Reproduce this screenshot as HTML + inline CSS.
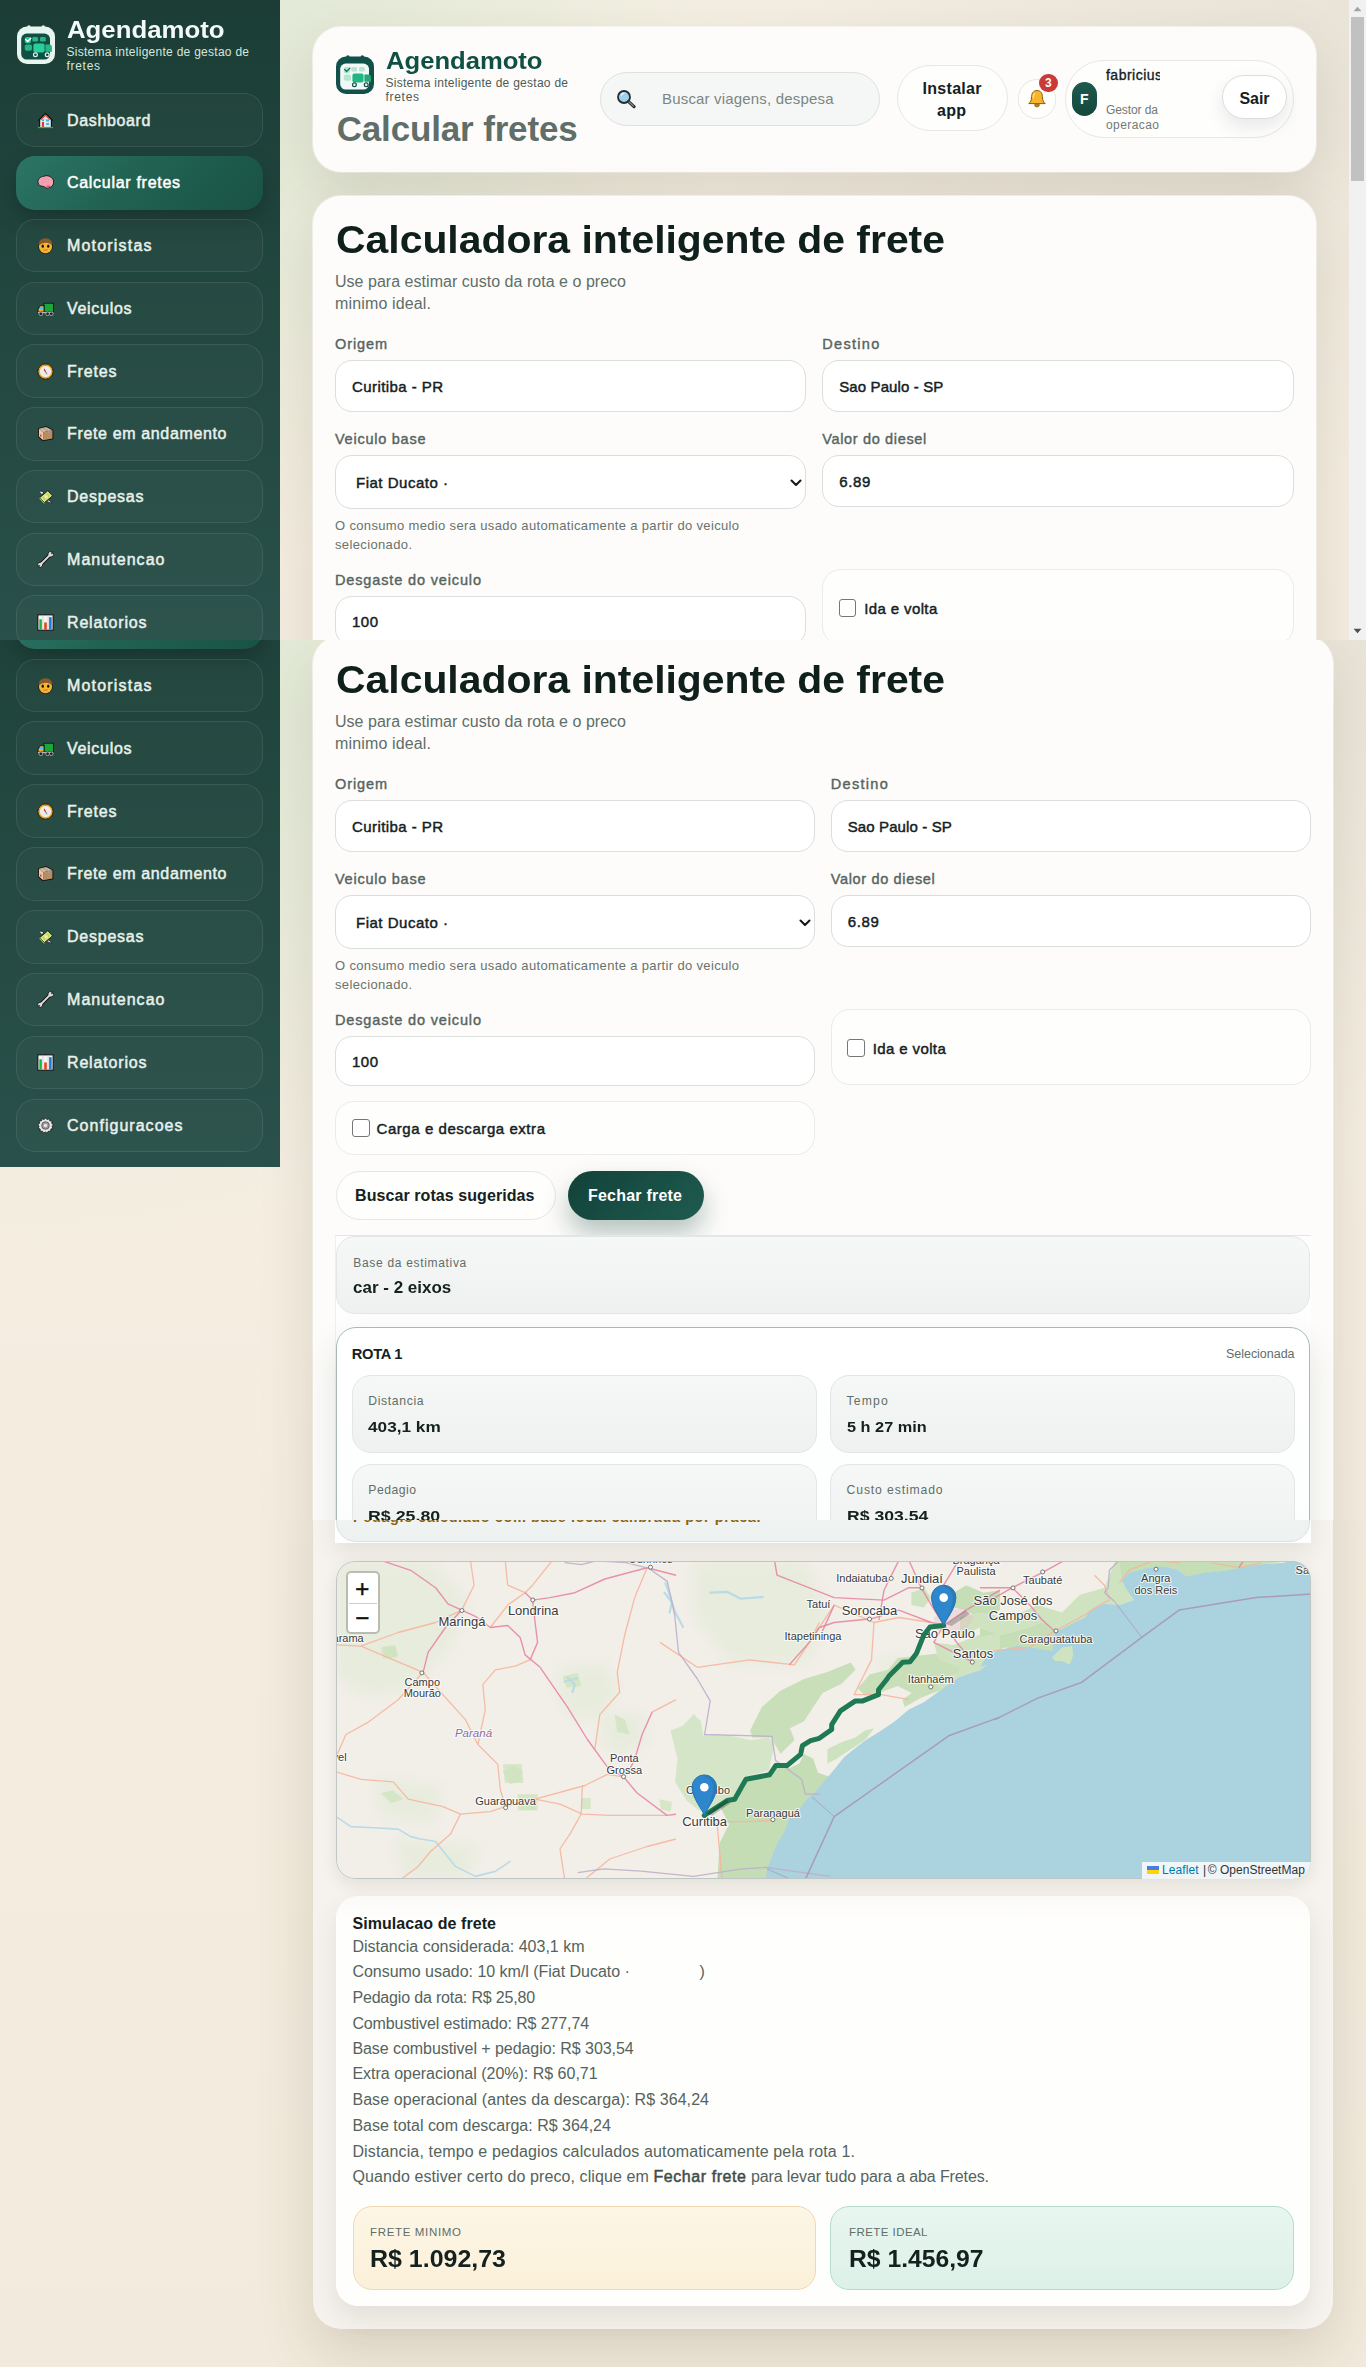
<!DOCTYPE html><html lang="pt-BR"><head><meta charset="utf-8"><title>Agendamoto - Calcular fretes</title><style>
*{box-sizing:border-box;margin:0;padding:0}
html,body{width:1366px;height:2367px;overflow:hidden}
body{position:relative;font-family:"Liberation Sans",sans-serif;background:#f4ecdf;-webkit-font-smoothing:antialiased}
.chunk{position:absolute;left:0;width:1366px;overflow:hidden}
.in{position:absolute;left:0;width:1366px}
.t{position:absolute;white-space:nowrap}
.b{position:absolute}
.card{background:#fdfcfa;border-radius:28px;box-shadow:0 22px 56px rgba(60,52,30,.13),0 0 0 1px rgba(255,255,255,.6)}
.inp{background:#fff;border:1px solid #dadfdc;border-radius:17px}
.soft{background:#fefefd;border:1px solid #e9ece9;border-radius:19px}
.nav{border:1px solid rgba(255,255,255,.09);border-radius:19px;background:rgba(255,255,255,.022)}
.nav.act{border:0;background:linear-gradient(135deg,#2c7565 0%,#216353 45%,#195245 100%);box-shadow:0 10px 22px rgba(0,0,0,.22)}
.met{background:linear-gradient(180deg,#f6f8f7,#eef1f0);border:1px solid #e2e6e4;border-radius:19px}
.cb{background:#fff;border:1.5px solid #767676;border-radius:3px}
svg{position:absolute;display:block}
</style></head><body>
<div class="chunk" style="top:0;height:640px;background:radial-gradient(760px 600px at 0px 0px,rgba(190,222,190,0.55),rgba(190,222,190,0) 100%),radial-gradient(700px 500px at 1366px 0px,rgba(150,150,140,0.14),rgba(150,150,140,0) 100%),linear-gradient(180deg,#f6f0e4,#f4ecdf);"><div class="in" style="top:0">
<div class="b card" style="left:313.00px;top:27.00px;width:1003.00px;height:144.50px;"></div>
<div class="b" style="left:336px;top:55.1px"><svg width="38" height="39" viewBox="0 -1 38 39">
<rect x="10.2" y="-0.8" width="3.4" height="4" rx="1.6" fill="#11514a"/><rect x="24.6" y="-0.8" width="3.4" height="4" rx="1.6" fill="#11514a"/>
<rect x="0" y="0.5" width="38" height="37.5" rx="10" fill="#11514a"/>
<rect x="4.2" y="7.6" width="28.8" height="26" rx="5.5" fill="#f2f8f5"/>
<rect x="7.8" y="11" width="6.2" height="6.2" rx="1.8" fill="#b8e5d1"/>
<path d="M8.7 13.6 L10.6 15.6 L13.8 12.2" stroke="#12805f" stroke-width="1.4" fill="none" stroke-linecap="round"/>
<rect x="15.3" y="11" width="5.8" height="4.6" rx="1.4" fill="#b8e5d1"/><rect x="23" y="11" width="5.8" height="4.6" rx="1.4" fill="#b8e5d1"/>
<rect x="7.8" y="18.5" width="7.2" height="6.2" rx="1.8" fill="#b8e5d1"/>
<rect x="16.4" y="17.4" width="11.2" height="9" rx="2" fill="#20b785"/>
<path d="M28.4 18.6 h4 a2.6 2.6 0 0 1 2.6 2.6 v4.6 h-6.6z" fill="#1fa878"/>
<circle cx="18.4" cy="28.7" r="1.9" fill="#f2f8f5" stroke="#11514a" stroke-width="1.2"/><circle cx="30.2" cy="28.7" r="1.9" fill="#f2f8f5" stroke="#11514a" stroke-width="1.2"/>
</svg></div>
<div class="t" style="top:47.93px;font-size:23.50px;line-height:26.25px;color:#0f4f44;left:385.50px;font-weight:700;transform:scaleX(1.0898);transform-origin:0 0;">Agendamoto</div>
<div class="t" style="top:76.84px;font-size:12.00px;line-height:13.40px;color:#4b5b56;left:385.50px;letter-spacing:0.271px;">Sistema inteligente de gestao de</div>
<div class="t" style="top:91.04px;font-size:12.00px;line-height:13.40px;color:#4b5b56;left:385.50px;letter-spacing:0.698px;">fretes</div>
<div class="t" style="top:109.42px;font-size:35.00px;line-height:39.09px;color:#5f6e68;left:336.70px;font-weight:700;letter-spacing:-0.155px;">Calcular fretes</div>
<div class="b " style="left:600.00px;top:72.00px;width:280.00px;height:54.00px;background:#f5f7f6;border:1px solid #dde2df;border-radius:27px;"></div>
<svg class="b" style="left:616px;top:89px" width="20" height="20" viewBox="0 0 20 20"><circle cx="8" cy="8" r="6" fill="#9fd0ef" stroke="#2a2a2a" stroke-width="1.8"/><path d="M5 6.5 A3.5 3.5 0 0 1 8.5 4.2" stroke="#e6f4fc" stroke-width="1.5" fill="none"/><path d="M12.6 12.6 L18 17.6" stroke="#2a2a2a" stroke-width="3.2" stroke-linecap="round"/><path d="M13 13 L17.4 17" stroke="#8a8a8a" stroke-width="1.2" stroke-linecap="round"/></svg>
<div class="t" style="top:91.12px;font-size:15.00px;line-height:16.75px;color:#7b8682;left:662.00px;letter-spacing:0.177px;">Buscar viagens, despesa</div>
<div class="b " style="left:897.00px;top:65.30px;width:110.50px;height:66.00px;background:#fefefd;border:1px solid #e6e9e6;border-radius:33px;"></div>
<div class="t" style="top:79.52px;font-size:16.00px;line-height:17.87px;color:#14211e;left:922.50px;font-weight:700;letter-spacing:0.298px;">Instalar</div>
<div class="t" style="top:102.02px;font-size:16.00px;line-height:17.87px;color:#14211e;left:937.00px;font-weight:700;letter-spacing:0.277px;">app</div>
<div class="b " style="left:1018.00px;top:79.00px;width:37.50px;height:40.00px;background:#fefefd;border:1px solid #e6e9e6;border-radius:20px;"></div>
<svg class="b" style="left:1027px;top:89px" width="20" height="20" viewBox="0 0 20 20"><path d="M10 1.5 C6.4 1.5 4.6 4.4 4.6 7.6 C4.6 11.6 3.4 13 1.8 14.6 H18.2 C16.6 13 15.4 11.6 15.4 7.6 C15.4 4.4 13.6 1.5 10 1.5Z" fill="#f6b62c" stroke="#8a5a12" stroke-width="1"/><path d="M7.6 15.6 A2.4 2.4 0 0 0 12.4 15.6Z" fill="#c98718" stroke="#8a5a12" stroke-width="0.8"/><path d="M7.4 4.4 C6.4 5.6 6.2 7 6.2 8.6" stroke="#fde08a" stroke-width="1.3" fill="none" stroke-linecap="round"/></svg>
<div class="b " style="left:1039.00px;top:73.50px;width:18.50px;height:18.50px;background:#c93b36;border-radius:10px;"></div>
<div class="t" style="top:76.64px;font-size:12.00px;line-height:13.40px;color:#fff;left:1045.00px;font-weight:700;">3</div>
<div class="b " style="left:1065.00px;top:59.50px;width:228.50px;height:78.50px;background:#fefefd;border:1px solid #e6e9e6;border-radius:39px;"></div>
<div class="b " style="left:1072.00px;top:81.50px;width:25.00px;height:34.50px;background:linear-gradient(180deg,#1d5a4d,#16473d);border-radius:13px;"></div>
<div class="t" style="top:91.83px;font-size:14.00px;line-height:15.64px;color:#fff;left:1080.00px;font-weight:700;">F</div>
<div class="b" style="left:1106px;top:62px;width:53.5px;height:74px;overflow:hidden"><div class="t" style="top:5.83px;font-size:14.00px;line-height:15.64px;color:#14211e;left:0.00px;letter-spacing:0.484px;-webkit-text-stroke:0.35px #14211e;">fabricius</div><div class="t" style="top:42.24px;font-size:12.00px;line-height:13.40px;color:#6f7b76;left:0.00px;letter-spacing:-0.087px;">Gestor da</div><div class="t" style="top:56.94px;font-size:12.00px;line-height:13.40px;color:#6f7b76;left:0.00px;letter-spacing:0.423px;">operacao</div></div>
<div class="b " style="left:1222.00px;top:75.30px;width:64.50px;height:44.00px;background:#fff;border:1px solid #d9dfdc;border-radius:22px;box-shadow:0 8px 18px rgba(30,40,35,.10);"></div>
<div class="t" style="top:89.52px;font-size:16.00px;line-height:17.87px;color:#14211e;left:1239.50px;font-weight:700;letter-spacing:-0.081px;">Sair</div>
<div class="b card" style="left:313.00px;top:196.00px;width:1003.00px;height:2000.00px;"></div>
<div class="t" style="top:219.01px;font-size:38.00px;line-height:42.45px;color:#0f1f1c;left:335.70px;font-weight:700;transform:scaleX(1.0761);transform-origin:0 0;">Calculadora inteligente de frete</div>
<div class="t" style="top:273.02px;font-size:16.00px;line-height:17.87px;color:#5f6e68;left:335.00px;letter-spacing:0.028px;">Use para estimar custo da rota e o preco</div>
<div class="t" style="top:295.02px;font-size:16.00px;line-height:17.87px;color:#5f6e68;left:335.00px;letter-spacing:0.145px;">minimo ideal.</div>
<div class="t" style="top:336.18px;font-size:14.50px;line-height:16.20px;color:#56645f;left:335.00px;letter-spacing:0.893px;-webkit-text-stroke:0.40px #56645f;">Origem</div>
<div class="t" style="top:336.18px;font-size:14.50px;line-height:16.20px;color:#56645f;left:822.25px;letter-spacing:1.306px;-webkit-text-stroke:0.40px #56645f;">Destino</div>
<div class="b inp" style="left:335.00px;top:360.00px;width:471.25px;height:52.00px;"></div>
<div class="b inp" style="left:822.25px;top:360.00px;width:471.25px;height:52.00px;"></div>
<div class="t" style="top:379.12px;font-size:15.00px;line-height:16.75px;color:#14211e;left:352.00px;letter-spacing:0.429px;-webkit-text-stroke:0.45px #14211e;">Curitiba - PR</div>
<div class="t" style="top:378.93px;font-size:15.00px;line-height:16.75px;color:#14211e;left:839.25px;letter-spacing:0.111px;-webkit-text-stroke:0.45px #14211e;">Sao Paulo - SP</div>
<div class="t" style="top:430.88px;font-size:14.50px;line-height:16.20px;color:#56645f;left:335.00px;letter-spacing:0.752px;-webkit-text-stroke:0.40px #56645f;">Veiculo base</div>
<div class="t" style="top:430.88px;font-size:14.50px;line-height:16.20px;color:#56645f;left:822.25px;letter-spacing:0.654px;-webkit-text-stroke:0.40px #56645f;">Valor do diesel</div>
<div class="b inp" style="left:335.00px;top:455.00px;width:471.25px;height:53.50px;"></div>
<div class="b inp" style="left:822.25px;top:455.00px;width:471.25px;height:52.00px;"></div>
<div class="t" style="top:475.12px;font-size:15.00px;line-height:16.75px;color:#14211e;left:356.00px;letter-spacing:0.512px;-webkit-text-stroke:0.45px #14211e;">Fiat Ducato ·</div>
<svg class="b" style="left:790.25px;top:479.00px" width="12" height="8" viewBox="0 0 12 8"><path d="M1.5 1.5 L6 6 L10.5 1.5" stroke="#1a1a1a" stroke-width="2.1" fill="none" stroke-linecap="round" stroke-linejoin="round"/></svg>
<div class="t" style="top:473.93px;font-size:15.00px;line-height:16.75px;color:#14211e;left:839.25px;letter-spacing:0.602px;-webkit-text-stroke:0.45px #14211e;">6.89</div>
<div class="t" style="top:518.74px;font-size:13.00px;line-height:14.52px;color:#66736e;left:335.00px;letter-spacing:0.345px;">O consumo medio sera usado automaticamente a partir do veiculo</div>
<div class="t" style="top:538.03px;font-size:13.00px;line-height:14.52px;color:#66736e;left:335.00px;letter-spacing:0.364px;">selecionado.</div>
<div class="t" style="top:572.18px;font-size:14.50px;line-height:16.20px;color:#56645f;left:335.00px;letter-spacing:0.857px;-webkit-text-stroke:0.40px #56645f;">Desgaste do veiculo</div>
<div class="b inp" style="left:335.00px;top:596.00px;width:471.25px;height:49.70px;"></div>
<div class="t" style="top:614.22px;font-size:15.00px;line-height:16.75px;color:#14211e;left:352.00px;letter-spacing:0.487px;-webkit-text-stroke:0.45px #14211e;">100</div>
<div class="b soft" style="left:822.25px;top:569.00px;width:471.25px;height:76.00px;"></div>
<div class="b cb" style="left:838.75px;top:599.00px;width:17.50px;height:17.50px;"></div>
<div class="t" style="top:600.92px;font-size:15.00px;line-height:16.75px;color:#14211e;left:864.25px;letter-spacing:0.379px;-webkit-text-stroke:0.45px #14211e;">Ida e volta</div>
<div class="b " style="left:0.00px;top:0.00px;width:280.00px;height:660.00px;background:linear-gradient(180deg,#1b3d36 0%,#20453d 35%,#29504a 100%);"></div>
<div class="b" style="left:17px;top:25.10px"><svg width="38" height="39" viewBox="0 -1 38 39">
<rect x="10.2" y="-0.8" width="3.4" height="4" rx="1.6" fill="#e8f5ef"/><rect x="24.6" y="-0.8" width="3.4" height="4" rx="1.6" fill="#e8f5ef"/>
<rect x="0" y="0.5" width="38" height="37.5" rx="10" fill="#e8f5ef"/>
<rect x="4.2" y="7.6" width="28.8" height="26" rx="5.5" fill="#0f4f44"/>
<rect x="7.8" y="11" width="6.2" height="6.2" rx="1.8" fill="#2fc48d"/>
<path d="M8.7 13.6 L10.6 15.6 L13.8 12.2" stroke="#ffffff" stroke-width="1.4" fill="none" stroke-linecap="round"/>
<rect x="15.3" y="11" width="5.8" height="4.6" rx="1.4" fill="#2bb486"/><rect x="23" y="11" width="5.8" height="4.6" rx="1.4" fill="#2bb486"/>
<rect x="7.8" y="18.5" width="7.2" height="6.2" rx="1.8" fill="#2bb486"/>
<rect x="16.4" y="17.4" width="11.2" height="9" rx="2" fill="#27d09a"/>
<path d="M28.4 18.6 h4 a2.6 2.6 0 0 1 2.6 2.6 v4.6 h-6.6z" fill="#24b886"/>
<circle cx="18.4" cy="28.7" r="1.9" fill="#0f4f44" stroke="#e8f5ef" stroke-width="1.2"/><circle cx="30.2" cy="28.7" r="1.9" fill="#0f4f44" stroke="#e8f5ef" stroke-width="1.2"/>
</svg></div>
<div class="t" style="top:17.03px;font-size:23.50px;line-height:26.25px;color:#f4faf7;left:66.50px;font-weight:700;transform:scaleX(1.0968);transform-origin:0 0;">Agendamoto</div>
<div class="t" style="top:46.24px;font-size:12.00px;line-height:13.40px;color:#d5e6df;left:66.50px;letter-spacing:0.271px;">Sistema inteligente de gestao de</div>
<div class="t" style="top:59.84px;font-size:12.00px;line-height:13.40px;color:#d5e6df;left:66.50px;letter-spacing:0.698px;">fretes</div>
<div class="b nav" style="left:16.00px;top:93.25px;width:247.00px;height:53.60px;"></div>
<div class="b" style="left:37px;top:111.55px"><svg width="17" height="17" viewBox="0 0 16 16"><path d="M8 0.5 L15.5 8 H14 V15 H2 V8 H0.5Z" fill="#111"/><path d="M8 2.3 L13 7.3 V14 H3 V7.3Z" fill="#e9e9ea"/><path d="M8 2.3 L13 7.3 H3Z" fill="#e03a24"/><path d="M8 3.8 L11.5 7.3 H4.5Z" fill="#e9e9ea"/><rect x="4.6" y="9.4" width="2" height="4.6" fill="#e03a24"/><rect x="8.6" y="7.2" width="2.8" height="1.8" fill="#35b5e8"/><rect x="8.6" y="10.4" width="2.8" height="1.8" fill="#35b5e8"/><rect x="4.6" y="7.2" width="2" height="1.4" fill="#35b5e8"/><rect x="1" y="14" width="14" height="1.2" fill="#2db34a"/></svg></div>
<div class="t" style="top:111.57px;font-size:16.00px;line-height:17.87px;color:#e6f1ec;left:67.00px;letter-spacing:0.653px;-webkit-text-stroke:0.50px #e6f1ec;">Dashboard</div>
<div class="b nav act" style="left:16.00px;top:156.00px;width:247.00px;height:53.60px;"></div>
<div class="b" style="left:37px;top:174.30px"><svg width="17" height="17" viewBox="0 0 16 16"><path d="M1 8.2 C0.5 5 3 2.4 6.4 2.2 C8.5 1 12 1.6 13.6 3.4 C15.8 4.6 16.3 8 15 10.2 C14.3 12 12.6 12.8 11.4 12.6 C10.8 13.6 9.6 13.8 8.6 13.2 C7.6 12.6 6.6 11.6 5.4 11.6 C3 11.8 1.4 10.2 1 8.2Z" fill="#f4a3b4" stroke="#1a1a1a" stroke-width="0.9"/><path d="M8.4 11.4 C9.6 10.6 11.6 10.6 12.8 11.2 C12 12.4 10.8 13 9.4 12.8Z" fill="#e8506a"/><path d="M5 5 C6.5 4 8 4.5 8.5 6 M9 3.5 C10.5 4 11 5.5 10.5 7 M4 8 C5.5 8.5 7 8 7.5 7" stroke="#e88aa0" stroke-width="0.7" fill="none"/></svg></div>
<div class="t" style="top:174.32px;font-size:16.00px;line-height:17.87px;color:#ffffff;left:67.00px;letter-spacing:0.704px;-webkit-text-stroke:0.50px #ffffff;">Calcular fretes</div>
<div class="b nav" style="left:16.00px;top:218.75px;width:247.00px;height:53.60px;"></div>
<div class="b" style="left:37px;top:237.05px"><svg width="17" height="17" viewBox="0 0 16 16"><ellipse cx="8" cy="8.6" rx="7" ry="7.2" fill="#1a1a1a"/><ellipse cx="8" cy="9" rx="6.2" ry="6.2" fill="#f2b632"/><path d="M1.6 8 C1.2 3.5 4.5 1.2 8 1.2 C11.5 1.2 14.8 3.5 14.4 8 C13 6.5 11 5.4 8.6 5.4 C6.6 5.4 4 6 1.6 8Z" fill="#8a5a2b"/><ellipse cx="5.4" cy="8.6" rx="1.1" ry="1.5" fill="#111"/><ellipse cx="10.6" cy="8.6" rx="1.1" ry="1.5" fill="#111"/><path d="M6 12 Q8 13.2 10 12" stroke="#d9603a" stroke-width="0.9" fill="none"/></svg></div>
<div class="t" style="top:237.07px;font-size:16.00px;line-height:17.87px;color:#e6f1ec;left:67.00px;letter-spacing:1.189px;-webkit-text-stroke:0.50px #e6f1ec;">Motoristas</div>
<div class="b nav" style="left:16.00px;top:281.50px;width:247.00px;height:53.60px;"></div>
<div class="b" style="left:37px;top:299.80px"><svg width="17" height="17" viewBox="0 0 16 16"><rect x="6.6" y="3" width="9" height="8.6" fill="#19a837" stroke="#111" stroke-width="0.8"/><path d="M1 11.8 V8.6 L3 5.4 H6.6 V11.8Z" fill="#f0a825" stroke="#111" stroke-width="0.8"/><path d="M2.2 8.4 L3.5 6.2 H5.6 V8.4Z" fill="#4fc3f7"/><rect x="0.6" y="11.2" width="15" height="1.6" fill="#ddd" stroke="#111" stroke-width="0.5"/><circle cx="3.6" cy="13" r="1.7" fill="#222" stroke="#bbb" stroke-width="0.7"/><circle cx="10" cy="13" r="1.7" fill="#222" stroke="#bbb" stroke-width="0.7"/><circle cx="13.4" cy="13" r="1.7" fill="#222" stroke="#bbb" stroke-width="0.7"/></svg></div>
<div class="t" style="top:299.82px;font-size:16.00px;line-height:17.87px;color:#e6f1ec;left:67.00px;letter-spacing:0.701px;-webkit-text-stroke:0.50px #e6f1ec;">Veiculos</div>
<div class="b nav" style="left:16.00px;top:344.25px;width:247.00px;height:53.60px;"></div>
<div class="b" style="left:37px;top:362.55px"><svg width="17" height="17" viewBox="0 0 16 16"><circle cx="8" cy="8" r="7.2" fill="#f2a516" stroke="#111" stroke-width="0.8"/><circle cx="8" cy="8" r="5.4" fill="#ececec"/><path d="M6.8 5.6 L9.4 10.6 L8 8.4Z" stroke="#888" stroke-width="0.9" fill="none"/><path d="M6.4 5 L8.2 7.4 L7 8Z" fill="#e02b2b"/><path d="M8 1.4 V2.6" stroke="#e02b2b" stroke-width="1"/></svg></div>
<div class="t" style="top:362.57px;font-size:16.00px;line-height:17.87px;color:#e6f1ec;left:67.00px;letter-spacing:0.831px;-webkit-text-stroke:0.50px #e6f1ec;">Fretes</div>
<div class="b nav" style="left:16.00px;top:407.00px;width:247.00px;height:53.60px;"></div>
<div class="b" style="left:37px;top:425.30px"><svg width="17" height="17" viewBox="0 0 16 16"><path d="M1 3 L8.6 1 L15.4 4.6 V13.4 L5.4 15.4 L1 11.4Z" fill="#111"/><path d="M1.8 3.6 L8.5 1.9 L14.5 5 L5.8 6.8Z" fill="#d9b48f"/><path d="M5.8 6.8 L14.5 5 V12.8 L5.8 14.4Z" fill="#b98d63"/><path d="M1.8 3.6 L5.8 6.8 V14.4 L1.8 10.9Z" fill="#e5c9a8"/><path d="M6.4 2.5 L11.6 5.5 V7.2 L10 7.5 V5.9 L4.9 2.9Z" fill="#9aa3ad"/><rect x="3" y="9" width="1.2" height="2" fill="#e02b2b"/></svg></div>
<div class="t" style="top:425.32px;font-size:16.00px;line-height:17.87px;color:#e6f1ec;left:67.00px;letter-spacing:0.646px;-webkit-text-stroke:0.50px #e6f1ec;">Frete em andamento</div>
<div class="b nav" style="left:16.00px;top:469.75px;width:247.00px;height:53.60px;"></div>
<div class="b" style="left:37px;top:488.05px"><svg width="17" height="17" viewBox="0 0 16 16"><path d="M2 3.2 C4 2.6 5.6 3.4 6.6 4.8 L4.4 6 C3.6 5 2.8 4.2 2 3.2Z" fill="#f5f5f5" stroke="#111" stroke-width="0.6"/><path d="M10 11 C11.4 11.6 12.8 12.4 14 13.8 C12.4 14 11 13.4 9.6 12.4Z" fill="#f5f5f5" stroke="#111" stroke-width="0.6"/><path d="M2.6 9 L10.2 2.6 L14.6 7.4 L7 13.8Z" fill="#dfe88a" stroke="#111" stroke-width="0.8"/><path d="M4.6 9.2 L10 4.6 L12.6 7.4 L7.2 12Z" fill="#c6d560"/><circle cx="8.6" cy="8.3" r="1.6" fill="#eef3b8"/><path d="M2.6 9 L7 13.8 L7 15 L2.2 10.2Z" fill="#a9c438"/></svg></div>
<div class="t" style="top:488.07px;font-size:16.00px;line-height:17.87px;color:#e6f1ec;left:67.00px;letter-spacing:0.765px;-webkit-text-stroke:0.50px #e6f1ec;">Despesas</div>
<div class="b nav" style="left:16.00px;top:532.50px;width:247.00px;height:53.60px;"></div>
<div class="b" style="left:37px;top:550.80px"><svg width="17" height="17" viewBox="0 0 16 16"><path d="M3.2 12.8 L12.8 3.2" stroke="#111" stroke-width="3.4" stroke-linecap="round"/><circle cx="13" cy="3" r="2.7" fill="#dedede" stroke="#111" stroke-width=".8"/><circle cx="3" cy="13" r="2.4" fill="#dedede" stroke="#111" stroke-width=".8"/><path d="M3.2 12.8 L12.8 3.2" stroke="#dedede" stroke-width="1.9" stroke-linecap="round"/><path d="M13.4 2.6 L16 0" stroke="#24483f" stroke-width="1.7"/><path d="M2.6 13.4 L0 16" stroke="#24483f" stroke-width="1.5"/></svg></div>
<div class="t" style="top:550.82px;font-size:16.00px;line-height:17.87px;color:#e6f1ec;left:67.00px;letter-spacing:1.049px;-webkit-text-stroke:0.50px #e6f1ec;">Manutencao</div>
<div class="b nav" style="left:16.00px;top:595.25px;width:247.00px;height:53.60px;"></div>
<div class="b" style="left:37px;top:613.55px"><svg width="17" height="17" viewBox="0 0 16 16"><rect x="0.8" y="0.8" width="14.4" height="14.4" fill="#f4f4f4" stroke="#111" stroke-width="1"/><path d="M5.5 1.5 V14.5 M10.5 1.5 V14.5" stroke="#d0d0d0" stroke-width="0.8"/><rect x="2.2" y="5" width="2.4" height="9.6" fill="#1fb53a"/><rect x="6.8" y="8" width="2.4" height="6.6" fill="#e8401c"/><rect x="11.4" y="3" width="2.4" height="11.6" fill="#1d78d8"/></svg></div>
<div class="t" style="top:613.57px;font-size:16.00px;line-height:17.87px;color:#e6f1ec;left:67.00px;letter-spacing:0.830px;-webkit-text-stroke:0.50px #e6f1ec;">Relatorios</div>
<div class="b nav" style="left:16.00px;top:658.00px;width:247.00px;height:53.60px;"></div>
<div class="b" style="left:37px;top:676.30px"><svg width="17" height="17" viewBox="0 0 16 16"><path d="M8 0.8 L9.4 2.4 L11.4 1.6 L12 3.6 L14.2 3.8 L13.8 6 L15.4 7.2 L14.2 8.8 L15 10.8 L13 11.4 L12.8 13.6 L10.6 13.4 L9.4 15.2 L8 14 L6.2 15.2 L5.2 13.4 L3 13.6 L3 11.4 L1 10.6 L2 8.8 L0.6 7.2 L2.4 6 L2 3.8 L4.2 3.6 L4.8 1.6 L6.8 2.4Z" fill="#e6e6e6" stroke="#111" stroke-width="0.7"/><circle cx="8" cy="8" r="3.6" fill="#9a9a9a" stroke="#333" stroke-width="0.6"/><circle cx="8" cy="8" r="1.6" fill="#e6e6e6"/></svg></div>
<div class="t" style="top:676.32px;font-size:16.00px;line-height:17.87px;color:#e6f1ec;left:67.00px;letter-spacing:1.027px;-webkit-text-stroke:0.50px #e6f1ec;">Configuracoes</div>
<div class="b " style="left:1349.00px;top:0.00px;width:17.00px;height:640.00px;background:#f1f1f1;"></div>
<div class="b " style="left:1351.00px;top:17.00px;width:13.00px;height:164.00px;background:#c1c1c1;"></div>
<svg class="b" style="left:1353px;top:6px" width="9" height="6" viewBox="0 0 9 6"><path d="M0.5 5.2 L4.5 0.8 L8.5 5.2Z" fill="#a3a3a3"/></svg>
<svg class="b" style="left:1353px;top:628px" width="9" height="6" viewBox="0 0 9 6"><path d="M0.5 0.8 L4.5 5.2 L8.5 0.8Z" fill="#505050"/></svg>
</div></div>
<div class="chunk" style="top:640px;height:880px;background:radial-gradient(760px 600px at 0px 0px,rgba(190,222,190,0.55),rgba(190,222,190,0) 100%),radial-gradient(700px 500px at 1366px 0px,rgba(150,150,140,0.14),rgba(150,150,140,0) 100%),linear-gradient(180deg,#f6f0e4,#f4ecdf);"><div class="in" style="top:-640px">
<div class="b card" style="left:313.00px;top:636.00px;width:1020.00px;height:2000.00px;"></div>
<div class="t" style="top:659.01px;font-size:38.00px;line-height:42.45px;color:#0f1f1c;left:335.70px;font-weight:700;transform:scaleX(1.0761);transform-origin:0 0;">Calculadora inteligente de frete</div>
<div class="t" style="top:713.02px;font-size:16.00px;line-height:17.87px;color:#5f6e68;left:335.00px;letter-spacing:0.028px;">Use para estimar custo da rota e o preco</div>
<div class="t" style="top:735.02px;font-size:16.00px;line-height:17.87px;color:#5f6e68;left:335.00px;letter-spacing:0.145px;">minimo ideal.</div>
<div class="t" style="top:776.18px;font-size:14.50px;line-height:16.20px;color:#56645f;left:335.00px;letter-spacing:0.893px;-webkit-text-stroke:0.40px #56645f;">Origem</div>
<div class="t" style="top:776.18px;font-size:14.50px;line-height:16.20px;color:#56645f;left:830.75px;letter-spacing:1.306px;-webkit-text-stroke:0.40px #56645f;">Destino</div>
<div class="b inp" style="left:335.00px;top:800.00px;width:479.75px;height:52.00px;"></div>
<div class="b inp" style="left:830.75px;top:800.00px;width:479.75px;height:52.00px;"></div>
<div class="t" style="top:819.12px;font-size:15.00px;line-height:16.75px;color:#14211e;left:352.00px;letter-spacing:0.429px;-webkit-text-stroke:0.45px #14211e;">Curitiba - PR</div>
<div class="t" style="top:818.92px;font-size:15.00px;line-height:16.75px;color:#14211e;left:847.75px;letter-spacing:0.111px;-webkit-text-stroke:0.45px #14211e;">Sao Paulo - SP</div>
<div class="t" style="top:870.88px;font-size:14.50px;line-height:16.20px;color:#56645f;left:335.00px;letter-spacing:0.752px;-webkit-text-stroke:0.40px #56645f;">Veiculo base</div>
<div class="t" style="top:870.88px;font-size:14.50px;line-height:16.20px;color:#56645f;left:830.75px;letter-spacing:0.654px;-webkit-text-stroke:0.40px #56645f;">Valor do diesel</div>
<div class="b inp" style="left:335.00px;top:895.00px;width:479.75px;height:53.50px;"></div>
<div class="b inp" style="left:830.75px;top:895.00px;width:479.75px;height:52.00px;"></div>
<div class="t" style="top:915.12px;font-size:15.00px;line-height:16.75px;color:#14211e;left:356.00px;letter-spacing:0.512px;-webkit-text-stroke:0.45px #14211e;">Fiat Ducato ·</div>
<svg class="b" style="left:798.75px;top:919.00px" width="12" height="8" viewBox="0 0 12 8"><path d="M1.5 1.5 L6 6 L10.5 1.5" stroke="#1a1a1a" stroke-width="2.1" fill="none" stroke-linecap="round" stroke-linejoin="round"/></svg>
<div class="t" style="top:913.92px;font-size:15.00px;line-height:16.75px;color:#14211e;left:847.75px;letter-spacing:0.602px;-webkit-text-stroke:0.45px #14211e;">6.89</div>
<div class="t" style="top:958.74px;font-size:13.00px;line-height:14.52px;color:#66736e;left:335.00px;letter-spacing:0.345px;">O consumo medio sera usado automaticamente a partir do veiculo</div>
<div class="t" style="top:978.03px;font-size:13.00px;line-height:14.52px;color:#66736e;left:335.00px;letter-spacing:0.364px;">selecionado.</div>
<div class="t" style="top:1012.18px;font-size:14.50px;line-height:16.20px;color:#56645f;left:335.00px;letter-spacing:0.857px;-webkit-text-stroke:0.40px #56645f;">Desgaste do veiculo</div>
<div class="b inp" style="left:335.00px;top:1036.00px;width:479.75px;height:49.70px;"></div>
<div class="t" style="top:1054.22px;font-size:15.00px;line-height:16.75px;color:#14211e;left:352.00px;letter-spacing:0.487px;-webkit-text-stroke:0.45px #14211e;">100</div>
<div class="b soft" style="left:830.75px;top:1009.00px;width:479.75px;height:76.00px;"></div>
<div class="b cb" style="left:847.25px;top:1039.00px;width:17.50px;height:17.50px;"></div>
<div class="t" style="top:1040.92px;font-size:15.00px;line-height:16.75px;color:#14211e;left:872.75px;letter-spacing:0.379px;-webkit-text-stroke:0.45px #14211e;">Ida e volta</div>
<div class="b soft" style="left:335.00px;top:1101.00px;width:479.75px;height:53.50px;"></div>
<div class="b cb" style="left:352.00px;top:1119.00px;width:17.50px;height:17.50px;"></div>
<div class="t" style="top:1120.72px;font-size:15.00px;line-height:16.75px;color:#14211e;left:376.50px;letter-spacing:0.559px;-webkit-text-stroke:0.45px #14211e;">Carga e descarga extra</div>
<div class="b " style="left:335.50px;top:1171.00px;width:220.00px;height:49.00px;background:#fefefd;border:1px solid #e4e8e5;border-radius:25px;"></div>
<div class="t" style="top:1186.72px;font-size:16.00px;line-height:17.87px;color:#14211e;left:355.00px;font-weight:700;letter-spacing:0.078px;">Buscar rotas sugeridas</div>
<div class="b " style="left:567.70px;top:1171.00px;width:136.00px;height:49.00px;background:linear-gradient(135deg,#12423a,#1f5b4f);border-radius:25px;box-shadow:0 14px 26px rgba(18,66,58,.30);"></div>
<div class="t" style="top:1186.72px;font-size:16.00px;line-height:17.87px;color:#fff;left:588.00px;font-weight:700;letter-spacing:0.219px;">Fechar frete</div>
<div class="b " style="left:335.00px;top:1235.00px;width:976.00px;height:400.00px;background:#fefefe;border-top:1px solid #e3e6e4;border-left:1px solid #eef0ee;"></div>
<div class="b met" style="left:336.00px;top:1236.00px;width:973.50px;height:78.00px;"></div>
<div class="t" style="top:1257.14px;font-size:12.00px;line-height:13.40px;color:#5f6e68;left:353.30px;letter-spacing:0.683px;">Base da estimativa</div>
<div class="t" style="top:1278.60px;font-size:15.80px;line-height:17.65px;color:#14211e;left:353.30px;font-weight:700;transform:scaleX(1.0762);transform-origin:0 0;">car - 2 eixos</div>
<div class="b " style="left:336.00px;top:1327.00px;width:973.50px;height:300.00px;background:linear-gradient(180deg,#ffffff 0%,#fdfefe 60%,#f4f7f6 100%);border:1px solid #a9bab4;border-radius:20px;box-shadow:0 16px 34px rgba(30,50,45,.12);"></div>
<div class="t" style="top:1345.70px;font-size:14.70px;line-height:16.42px;color:#14211e;left:351.80px;font-weight:700;letter-spacing:-0.329px;">ROTA 1</div>
<div class="t" style="top:1347.79px;font-size:12.50px;line-height:13.96px;color:#5f6e68;right:71.53px;letter-spacing:-0.030px;">Selecionada</div>
<div class="b met" style="left:351.50px;top:1375.20px;width:465.25px;height:77.60px;"></div>
<div class="t" style="top:1395.06px;font-size:12.20px;line-height:13.63px;color:#5f6e68;left:368.30px;letter-spacing:0.640px;">Distancia</div>
<div class="t" style="top:1417.75px;font-size:15.30px;line-height:17.09px;color:#14211e;left:368.30px;font-weight:700;transform:scaleX(1.1251);transform-origin:0 0;">403,1 km</div>
<div class="b met" style="left:829.75px;top:1375.20px;width:465.25px;height:77.60px;"></div>
<div class="t" style="top:1395.06px;font-size:12.20px;line-height:13.63px;color:#5f6e68;left:846.55px;letter-spacing:1.183px;">Tempo</div>
<div class="t" style="top:1417.75px;font-size:15.30px;line-height:17.09px;color:#14211e;left:846.55px;font-weight:700;transform:scaleX(1.0659);transform-origin:0 0;">5 h 27 min</div>
<div class="b met" style="left:351.50px;top:1464.40px;width:465.25px;height:77.60px;"></div>
<div class="t" style="top:1484.26px;font-size:12.20px;line-height:13.63px;color:#5f6e68;left:368.30px;letter-spacing:0.508px;">Pedagio</div>
<div class="t" style="top:1506.95px;font-size:15.30px;line-height:17.09px;color:#14211e;left:368.30px;font-weight:700;transform:scaleX(1.1633);transform-origin:0 0;">R$ 25,80</div>
<div class="b met" style="left:829.75px;top:1464.40px;width:465.25px;height:77.60px;"></div>
<div class="t" style="top:1484.26px;font-size:12.20px;line-height:13.63px;color:#5f6e68;left:846.55px;letter-spacing:0.876px;">Custo estimado</div>
<div class="t" style="top:1506.95px;font-size:15.30px;line-height:17.09px;color:#14211e;left:846.55px;font-weight:700;transform:scaleX(1.1510);transform-origin:0 0;">R$ 303,54</div>
<div class="b " style="left:0.00px;top:439.60px;width:280.00px;height:727.60px;background:linear-gradient(180deg,#1b3d36 0%,#20453d 35%,#29504a 100%);"></div>
<div class="b" style="left:17px;top:464.70px"><svg width="38" height="39" viewBox="0 -1 38 39">
<rect x="10.2" y="-0.8" width="3.4" height="4" rx="1.6" fill="#e8f5ef"/><rect x="24.6" y="-0.8" width="3.4" height="4" rx="1.6" fill="#e8f5ef"/>
<rect x="0" y="0.5" width="38" height="37.5" rx="10" fill="#e8f5ef"/>
<rect x="4.2" y="7.6" width="28.8" height="26" rx="5.5" fill="#0f4f44"/>
<rect x="7.8" y="11" width="6.2" height="6.2" rx="1.8" fill="#2fc48d"/>
<path d="M8.7 13.6 L10.6 15.6 L13.8 12.2" stroke="#ffffff" stroke-width="1.4" fill="none" stroke-linecap="round"/>
<rect x="15.3" y="11" width="5.8" height="4.6" rx="1.4" fill="#2bb486"/><rect x="23" y="11" width="5.8" height="4.6" rx="1.4" fill="#2bb486"/>
<rect x="7.8" y="18.5" width="7.2" height="6.2" rx="1.8" fill="#2bb486"/>
<rect x="16.4" y="17.4" width="11.2" height="9" rx="2" fill="#27d09a"/>
<path d="M28.4 18.6 h4 a2.6 2.6 0 0 1 2.6 2.6 v4.6 h-6.6z" fill="#24b886"/>
<circle cx="18.4" cy="28.7" r="1.9" fill="#0f4f44" stroke="#e8f5ef" stroke-width="1.2"/><circle cx="30.2" cy="28.7" r="1.9" fill="#0f4f44" stroke="#e8f5ef" stroke-width="1.2"/>
</svg></div>
<div class="t" style="top:456.63px;font-size:23.50px;line-height:26.25px;color:#f4faf7;left:66.50px;font-weight:700;transform:scaleX(1.0968);transform-origin:0 0;">Agendamoto</div>
<div class="t" style="top:485.84px;font-size:12.00px;line-height:13.40px;color:#d5e6df;left:66.50px;letter-spacing:0.271px;">Sistema inteligente de gestao de</div>
<div class="t" style="top:499.44px;font-size:12.00px;line-height:13.40px;color:#d5e6df;left:66.50px;letter-spacing:0.698px;">fretes</div>
<div class="b nav" style="left:16.00px;top:532.85px;width:247.00px;height:53.60px;"></div>
<div class="b" style="left:37px;top:551.15px"><svg width="17" height="17" viewBox="0 0 16 16"><path d="M8 0.5 L15.5 8 H14 V15 H2 V8 H0.5Z" fill="#111"/><path d="M8 2.3 L13 7.3 V14 H3 V7.3Z" fill="#e9e9ea"/><path d="M8 2.3 L13 7.3 H3Z" fill="#e03a24"/><path d="M8 3.8 L11.5 7.3 H4.5Z" fill="#e9e9ea"/><rect x="4.6" y="9.4" width="2" height="4.6" fill="#e03a24"/><rect x="8.6" y="7.2" width="2.8" height="1.8" fill="#35b5e8"/><rect x="8.6" y="10.4" width="2.8" height="1.8" fill="#35b5e8"/><rect x="4.6" y="7.2" width="2" height="1.4" fill="#35b5e8"/><rect x="1" y="14" width="14" height="1.2" fill="#2db34a"/></svg></div>
<div class="t" style="top:551.17px;font-size:16.00px;line-height:17.87px;color:#e6f1ec;left:67.00px;letter-spacing:0.653px;-webkit-text-stroke:0.50px #e6f1ec;">Dashboard</div>
<div class="b nav act" style="left:16.00px;top:595.70px;width:247.00px;height:53.60px;"></div>
<div class="b" style="left:37px;top:614.00px"><svg width="17" height="17" viewBox="0 0 16 16"><path d="M1 8.2 C0.5 5 3 2.4 6.4 2.2 C8.5 1 12 1.6 13.6 3.4 C15.8 4.6 16.3 8 15 10.2 C14.3 12 12.6 12.8 11.4 12.6 C10.8 13.6 9.6 13.8 8.6 13.2 C7.6 12.6 6.6 11.6 5.4 11.6 C3 11.8 1.4 10.2 1 8.2Z" fill="#f4a3b4" stroke="#1a1a1a" stroke-width="0.9"/><path d="M8.4 11.4 C9.6 10.6 11.6 10.6 12.8 11.2 C12 12.4 10.8 13 9.4 12.8Z" fill="#e8506a"/><path d="M5 5 C6.5 4 8 4.5 8.5 6 M9 3.5 C10.5 4 11 5.5 10.5 7 M4 8 C5.5 8.5 7 8 7.5 7" stroke="#e88aa0" stroke-width="0.7" fill="none"/></svg></div>
<div class="t" style="top:614.02px;font-size:16.00px;line-height:17.87px;color:#ffffff;left:67.00px;letter-spacing:0.704px;-webkit-text-stroke:0.50px #ffffff;">Calcular fretes</div>
<div class="b nav" style="left:16.00px;top:658.55px;width:247.00px;height:53.60px;"></div>
<div class="b" style="left:37px;top:676.85px"><svg width="17" height="17" viewBox="0 0 16 16"><ellipse cx="8" cy="8.6" rx="7" ry="7.2" fill="#1a1a1a"/><ellipse cx="8" cy="9" rx="6.2" ry="6.2" fill="#f2b632"/><path d="M1.6 8 C1.2 3.5 4.5 1.2 8 1.2 C11.5 1.2 14.8 3.5 14.4 8 C13 6.5 11 5.4 8.6 5.4 C6.6 5.4 4 6 1.6 8Z" fill="#8a5a2b"/><ellipse cx="5.4" cy="8.6" rx="1.1" ry="1.5" fill="#111"/><ellipse cx="10.6" cy="8.6" rx="1.1" ry="1.5" fill="#111"/><path d="M6 12 Q8 13.2 10 12" stroke="#d9603a" stroke-width="0.9" fill="none"/></svg></div>
<div class="t" style="top:676.87px;font-size:16.00px;line-height:17.87px;color:#e6f1ec;left:67.00px;letter-spacing:1.189px;-webkit-text-stroke:0.50px #e6f1ec;">Motoristas</div>
<div class="b nav" style="left:16.00px;top:721.40px;width:247.00px;height:53.60px;"></div>
<div class="b" style="left:37px;top:739.70px"><svg width="17" height="17" viewBox="0 0 16 16"><rect x="6.6" y="3" width="9" height="8.6" fill="#19a837" stroke="#111" stroke-width="0.8"/><path d="M1 11.8 V8.6 L3 5.4 H6.6 V11.8Z" fill="#f0a825" stroke="#111" stroke-width="0.8"/><path d="M2.2 8.4 L3.5 6.2 H5.6 V8.4Z" fill="#4fc3f7"/><rect x="0.6" y="11.2" width="15" height="1.6" fill="#ddd" stroke="#111" stroke-width="0.5"/><circle cx="3.6" cy="13" r="1.7" fill="#222" stroke="#bbb" stroke-width="0.7"/><circle cx="10" cy="13" r="1.7" fill="#222" stroke="#bbb" stroke-width="0.7"/><circle cx="13.4" cy="13" r="1.7" fill="#222" stroke="#bbb" stroke-width="0.7"/></svg></div>
<div class="t" style="top:739.72px;font-size:16.00px;line-height:17.87px;color:#e6f1ec;left:67.00px;letter-spacing:0.701px;-webkit-text-stroke:0.50px #e6f1ec;">Veiculos</div>
<div class="b nav" style="left:16.00px;top:784.25px;width:247.00px;height:53.60px;"></div>
<div class="b" style="left:37px;top:802.55px"><svg width="17" height="17" viewBox="0 0 16 16"><circle cx="8" cy="8" r="7.2" fill="#f2a516" stroke="#111" stroke-width="0.8"/><circle cx="8" cy="8" r="5.4" fill="#ececec"/><path d="M6.8 5.6 L9.4 10.6 L8 8.4Z" stroke="#888" stroke-width="0.9" fill="none"/><path d="M6.4 5 L8.2 7.4 L7 8Z" fill="#e02b2b"/><path d="M8 1.4 V2.6" stroke="#e02b2b" stroke-width="1"/></svg></div>
<div class="t" style="top:802.57px;font-size:16.00px;line-height:17.87px;color:#e6f1ec;left:67.00px;letter-spacing:0.831px;-webkit-text-stroke:0.50px #e6f1ec;">Fretes</div>
<div class="b nav" style="left:16.00px;top:847.10px;width:247.00px;height:53.60px;"></div>
<div class="b" style="left:37px;top:865.40px"><svg width="17" height="17" viewBox="0 0 16 16"><path d="M1 3 L8.6 1 L15.4 4.6 V13.4 L5.4 15.4 L1 11.4Z" fill="#111"/><path d="M1.8 3.6 L8.5 1.9 L14.5 5 L5.8 6.8Z" fill="#d9b48f"/><path d="M5.8 6.8 L14.5 5 V12.8 L5.8 14.4Z" fill="#b98d63"/><path d="M1.8 3.6 L5.8 6.8 V14.4 L1.8 10.9Z" fill="#e5c9a8"/><path d="M6.4 2.5 L11.6 5.5 V7.2 L10 7.5 V5.9 L4.9 2.9Z" fill="#9aa3ad"/><rect x="3" y="9" width="1.2" height="2" fill="#e02b2b"/></svg></div>
<div class="t" style="top:865.42px;font-size:16.00px;line-height:17.87px;color:#e6f1ec;left:67.00px;letter-spacing:0.646px;-webkit-text-stroke:0.50px #e6f1ec;">Frete em andamento</div>
<div class="b nav" style="left:16.00px;top:909.95px;width:247.00px;height:53.60px;"></div>
<div class="b" style="left:37px;top:928.25px"><svg width="17" height="17" viewBox="0 0 16 16"><path d="M2 3.2 C4 2.6 5.6 3.4 6.6 4.8 L4.4 6 C3.6 5 2.8 4.2 2 3.2Z" fill="#f5f5f5" stroke="#111" stroke-width="0.6"/><path d="M10 11 C11.4 11.6 12.8 12.4 14 13.8 C12.4 14 11 13.4 9.6 12.4Z" fill="#f5f5f5" stroke="#111" stroke-width="0.6"/><path d="M2.6 9 L10.2 2.6 L14.6 7.4 L7 13.8Z" fill="#dfe88a" stroke="#111" stroke-width="0.8"/><path d="M4.6 9.2 L10 4.6 L12.6 7.4 L7.2 12Z" fill="#c6d560"/><circle cx="8.6" cy="8.3" r="1.6" fill="#eef3b8"/><path d="M2.6 9 L7 13.8 L7 15 L2.2 10.2Z" fill="#a9c438"/></svg></div>
<div class="t" style="top:928.27px;font-size:16.00px;line-height:17.87px;color:#e6f1ec;left:67.00px;letter-spacing:0.765px;-webkit-text-stroke:0.50px #e6f1ec;">Despesas</div>
<div class="b nav" style="left:16.00px;top:972.80px;width:247.00px;height:53.60px;"></div>
<div class="b" style="left:37px;top:991.10px"><svg width="17" height="17" viewBox="0 0 16 16"><path d="M3.2 12.8 L12.8 3.2" stroke="#111" stroke-width="3.4" stroke-linecap="round"/><circle cx="13" cy="3" r="2.7" fill="#dedede" stroke="#111" stroke-width=".8"/><circle cx="3" cy="13" r="2.4" fill="#dedede" stroke="#111" stroke-width=".8"/><path d="M3.2 12.8 L12.8 3.2" stroke="#dedede" stroke-width="1.9" stroke-linecap="round"/><path d="M13.4 2.6 L16 0" stroke="#24483f" stroke-width="1.7"/><path d="M2.6 13.4 L0 16" stroke="#24483f" stroke-width="1.5"/></svg></div>
<div class="t" style="top:991.12px;font-size:16.00px;line-height:17.87px;color:#e6f1ec;left:67.00px;letter-spacing:1.049px;-webkit-text-stroke:0.50px #e6f1ec;">Manutencao</div>
<div class="b nav" style="left:16.00px;top:1035.65px;width:247.00px;height:53.60px;"></div>
<div class="b" style="left:37px;top:1053.95px"><svg width="17" height="17" viewBox="0 0 16 16"><rect x="0.8" y="0.8" width="14.4" height="14.4" fill="#f4f4f4" stroke="#111" stroke-width="1"/><path d="M5.5 1.5 V14.5 M10.5 1.5 V14.5" stroke="#d0d0d0" stroke-width="0.8"/><rect x="2.2" y="5" width="2.4" height="9.6" fill="#1fb53a"/><rect x="6.8" y="8" width="2.4" height="6.6" fill="#e8401c"/><rect x="11.4" y="3" width="2.4" height="11.6" fill="#1d78d8"/></svg></div>
<div class="t" style="top:1053.97px;font-size:16.00px;line-height:17.87px;color:#e6f1ec;left:67.00px;letter-spacing:0.830px;-webkit-text-stroke:0.50px #e6f1ec;">Relatorios</div>
<div class="b nav" style="left:16.00px;top:1098.50px;width:247.00px;height:53.60px;"></div>
<div class="b" style="left:37px;top:1116.80px"><svg width="17" height="17" viewBox="0 0 16 16"><path d="M8 0.8 L9.4 2.4 L11.4 1.6 L12 3.6 L14.2 3.8 L13.8 6 L15.4 7.2 L14.2 8.8 L15 10.8 L13 11.4 L12.8 13.6 L10.6 13.4 L9.4 15.2 L8 14 L6.2 15.2 L5.2 13.4 L3 13.6 L3 11.4 L1 10.6 L2 8.8 L0.6 7.2 L2.4 6 L2 3.8 L4.2 3.6 L4.8 1.6 L6.8 2.4Z" fill="#e6e6e6" stroke="#111" stroke-width="0.7"/><circle cx="8" cy="8" r="3.6" fill="#9a9a9a" stroke="#333" stroke-width="0.6"/><circle cx="8" cy="8" r="1.6" fill="#e6e6e6"/></svg></div>
<div class="t" style="top:1116.82px;font-size:16.00px;line-height:17.87px;color:#e6f1ec;left:67.00px;letter-spacing:1.027px;-webkit-text-stroke:0.50px #e6f1ec;">Configuracoes</div>
</div></div>
<div class="chunk" style="top:1520px;height:847px;background:linear-gradient(180deg,#f4ecdf,#f2eadc)"><div class="in" style="top:-1520px">
<div class="b " style="left:313.00px;top:1000.00px;width:1020.00px;height:1329.00px;background:#f6f3ee;border-radius:28px;box-shadow:0 24px 56px rgba(70,55,25,.15);"></div>
<div class="b " style="left:335.00px;top:1400.00px;width:975.50px;height:142.80px;background:#fefefe;box-shadow:0 10px 22px rgba(60,50,30,.09);"></div>
<div class="b " style="left:336.00px;top:1300.00px;width:973.50px;height:242.00px;background:linear-gradient(180deg,#f2f5f4 0%,#eff3f1 90%,#edf1ef 100%);border:1px solid #dbe2df;border-radius:20px;"></div>
<div class="t" style="top:1508.58px;font-size:14.50px;line-height:16.20px;color:#8a6416;left:353.00px;font-weight:700;letter-spacing:0.584px;">Pedagio calculado com base local calibrada por praca.</div>
<div class="b" style="left:336px;top:1560.7px;width:975px;height:318px;border-radius:19px;overflow:hidden;background:#f2efe9;box-shadow:0 6px 16px rgba(60,50,30,.10);font-family:'Liberation Sans',sans-serif"><svg width="975" height="318" viewBox="0 0 975 318" style="position:absolute;left:0;top:0">
<rect width="975" height="318" fill="#f2efe9"/>
<defs><filter id="bl" x="-20%" y="-20%" width="140%" height="140%"><feGaussianBlur stdDeviation="7"/></filter><filter id="bl2" x="-10%" y="-10%" width="120%" height="120%"><feGaussianBlur stdDeviation="1.2"/></filter></defs>
<g filter="url(#bl)" opacity=".32">
<path d="M-1.1 1.7 L96.0 1.7 L133.4 42.8 L111.0 91.3 L69.9 128.7 L28.8 136.1 L-1.1 113.7Z" fill="#d3e6c4"/>
<path d="M223.0 106.3 L267.8 102.5 L282.7 128.7 L267.8 154.8 L237.9 158.5 L223.0 136.1Z" fill="#d3e6c4"/>
<path d="M267.8 154.8 L305.1 151.1 L312.6 180.9 L282.7 195.9 L264.1 180.9Z" fill="#d3e6c4"/>
<path d="M40.0 218.3 L107.2 225.8 L96.0 263.1 L43.7 255.6Z" fill="#d3e6c4"/>
<path d="M58.7 278.0 L140.8 285.5 L133.4 317.6 L66.2 317.6Z" fill="#d3e6c4"/>
<path d="M357.4 1.7 L469.4 1.7 L494.1 54.0 L469.4 102.5 L394.8 102.5 L357.4 54.0Z" fill="#d3e6c4"/>
<path d="M428.5 61.5 L453.4 56.5 L463.4 74.0 L448.4 93.9 L428.5 88.9Z" fill="#d3e6c4"/>
<path d="M538.0 103.8 L562.9 93.9 L572.9 103.8 L548.0 116.3Z" fill="#d3e6c4"/>
</g>
<path d="M166.7 210.8 L176.7 204.6 L186.7 210.8 L184.2 220.8 L174.2 223.3Z" fill="#cfe3bf" opacity=".8"/>
<path d="M181.7 233.2 L201.6 233.2 L201.6 249.4 L181.7 249.4Z" fill="#cfe3bf" opacity=".8"/>
<path d="M44.8 232.0 L57.2 229.5 L67.2 238.2 L54.8 242.0Z" fill="#cfe3bf" opacity=".8"/>
<path d="M323.5 238.2 L336.0 240.7 L334.7 250.7 L324.8 248.2Z" fill="#cfe3bf" opacity=".8"/>
<path d="M44.8 86.4 L59.7 85.2 L61.0 96.4 L47.3 97.6Z" fill="#cfe3bf" opacity=".8"/>
<path d="M278.7 153.6 L288.7 158.6 L293.7 173.5 L281.2 171.0Z" fill="#cfe3bf" opacity=".8"/>
<path d="M167.0 203.3 L185.6 203.3 L187.5 222.0 L168.8 222.0Z" fill="#cfe3bf" opacity=".8"/>
<path d="M226.7 115.6 L241.7 111.9 L245.4 124.9 L230.5 126.8Z" fill="#cfe3bf" opacity=".8"/>
<path d="M47.5 85.7 L58.7 83.9 L62.4 95.1 L49.3 96.9Z" fill="#cfe3bf" opacity=".8"/>
<path d="M185.6 240.7 L200.6 240.7 L200.6 248.9 L185.6 248.9Z" fill="#cfe3bf" opacity=".8"/>
<path d="M245.4 237.0 L254.7 237.0 L254.7 248.2 L245.4 248.2Z" fill="#cfe3bf" opacity=".8"/>
<path d="M334.5 169.6 L346.2 164.9 L357.9 153.2 L364.9 160.2 L367.2 174.3 L393.0 174.3 L414.1 178.9 L432.8 176.6 L438.7 183.6 L432.8 209.4 L407.1 216.4 L397.7 237.5 L386.0 239.8 L374.3 251.6 L362.6 249.2 L350.8 239.8 L339.1 221.1 L341.5 197.7Z" fill="#d5e6c8"/>
<path d="M414.1 169.6 L425.8 146.1 L444.5 129.8 L468.0 118.0 L491.4 111.0 L514.8 101.6 L519.5 108.7 L505.5 122.7 L486.7 132.1 L477.3 146.1 L468.0 160.2 L453.9 167.2 L458.6 178.9 L444.5 193.0 L435.2 176.6 L416.4 176.6Z" fill="#c8dfb9"/>
<path d="M383.6 244.5 L402.4 237.5 L409.4 218.8 L435.2 214.1 L439.9 204.7 L453.9 207.1 L463.3 202.4 L468.0 193.0 L477.3 197.7 L482.0 211.7 L496.1 216.4 L491.4 225.8 L482.0 230.5 L475.0 237.5 L463.3 249.2 L453.9 260.9 L449.2 272.6 L444.5 286.7 L435.2 300.8 L430.5 320.7 L381.3 320.7 L383.6 282.0 L393.0 263.3Z" fill="#c5ddb4"/>
<path d="M521.8 127.4 L533.6 113.4 L552.3 108.7 L561.7 97.0 L624.0 89.9 L624.0 113.4 L608.5 127.4 L585.1 136.8 L568.7 146.1 L566.4 139.1 L575.7 132.1 L561.7 125.1 L542.9 132.1 L528.9 134.4Z" fill="#c8dfb9"/>
<path d="M491.4 188.3 L505.5 181.3 L519.5 176.6 L528.9 169.6 L538.2 167.2 L528.9 178.9 L514.8 188.3 L500.8 197.7 L491.4 202.4Z" fill="#cde2be"/>
<path d="M575.4 31.7 L587.8 26.7 L595.3 36.6 L587.8 46.6 L575.4 44.1Z" fill="#cfe3c0"/>
<path d="M617.7 31.7 L630.1 24.2 L647.5 31.7 L664.0 29.2 L664.0 49.1 L645.1 59.0 L630.1 49.1 L617.7 46.6Z" fill="#c6deb6"/>
<path d="M597.8 81.4 L617.7 83.9 L642.6 74.0 L664.0 69.0 L664.0 93.9 L647.5 101.3 L622.7 106.3 L602.7 98.9Z" fill="#cfe3c0"/>
<path d="M644.0 66.5 L663.9 73.9 L683.8 69.0 L706.2 61.5 L718.7 64.0 L718.7 91.4 L693.8 90.1 L668.9 86.4 L649.0 93.9 L644.0 103.8Z" fill="#c6deb6"/>
<path d="M726.1 51.5 L743.6 34.1 L768.4 26.7 L778.4 1.8 L783.4 -3.2 L803.3 -3.2 L833.1 1.8 L843.1 9.2 L840.6 26.7 L828.2 31.6 L798.3 39.1 L783.4 44.1 L768.4 42.8 L756.0 47.8 L748.5 56.5 L728.6 69.0 L718.7 71.5Z" fill="#cfe3c0"/>
<path d="M850.6 9.2 L868.0 4.3 L892.9 1.8 L917.8 -0.7 L930.2 -0.7 L930.2 4.3 L892.9 9.7 L868.0 12.2 L850.6 16.2Z" fill="#c6deb6"/>
<path d="M624.1 56.5 L644.0 51.5 L673.9 56.5 L701.2 44.1 L726.1 51.5 L718.7 71.5 L706.2 61.5 L683.8 69.0 L663.9 73.9 L644.0 66.5 L624.1 76.4Z" fill="#cfe3c0"/>
<path d="M783.4 -3.2 L818.2 -8.2 L868.0 -8.2 L917.8 -8.2 L958.1 -8.2 L958.1 -0.7 L930.2 3.0 L892.9 9.2 L868.0 11.7 L850.6 15.5 L843.1 9.2 L828.2 5.5 L813.2 6.7 L793.3 11.7 L785.9 19.2Z" fill="#c6deb6"/>
<path d="M630.1 78.9 L664.0 71.5 L664.0 97.6 L655.0 99.3 L645.1 108.8 L622.7 116.3 L605.2 128.7 L597.8 121.3 L622.7 111.3Z" fill="#cfe3c0"/>
<path d="M716.2 96.3 L726.1 86.4 L736.1 85.1 L737.3 93.9 L733.6 103.8 L726.1 100.1 L718.7 100.1Z" fill="#c6deb6"/>
<path d="M429.8 320.4 L431.0 307.9 L436.0 295.5 L441.0 283.0 L448.4 270.6 L453.4 258.1 L463.4 248.2 L470.8 238.2 L478.3 232.0 L485.8 223.3 L498.2 208.4 L508.2 195.9 L520.6 186.0 L530.6 178.5 L543.0 171.0 L557.9 161.1 L572.9 148.6 L587.8 141.2 L605.2 128.7 L622.7 116.3 L645.1 108.8 L655.0 99.3 L664.0 97.6 L644.0 106.3 L651.5 93.9 L663.9 88.9 L681.3 85.1 L701.2 87.6 L716.2 90.1 L718.7 71.5 L733.6 64.0 L748.5 56.5 L756.0 47.8 L768.4 42.8 L783.4 44.1 L798.3 39.1 L790.8 29.1 L785.9 19.2 L793.3 11.7 L813.2 6.7 L828.2 5.5 L843.1 9.2 L850.6 15.5 L868.0 11.7 L882.9 10.5 L892.9 9.2 L905.3 6.7 L917.8 4.3 L930.2 3.0 L947.6 1.8 L958.1 -0.7 L975.0 -2.0 L975.0 320.0 L429.8 320.0Z" fill="#aad3df"/>
<path d="M716.2 96.3 L726.1 86.4 L736.1 85.1 L737.3 93.9 L733.6 103.8 L726.1 100.1 L718.7 100.1Z" fill="#cfe3c0"/>
<path d="M0.0 255.6 L14.9 265.6 L37.3 266.8 L62.2 268.1 L74.7 275.6 L84.6 278.0 L99.6 280.5 L109.5 293.0 L119.5 305.4 L139.4 315.4 L159.3 310.4 L174.2 300.4" fill="none" stroke="#b9dbe7" stroke-width="1.6" stroke-linecap="round" stroke-linejoin="round"/>
<path d="M231.5 116.3 L238.9 123.7 L236.4 131.2" fill="none" stroke="#b9dbe7" stroke-width="2.2" stroke-linecap="round" stroke-linejoin="round"/>
<path d="M328.5 31.7 L336.0 41.6 L333.5 51.6" fill="none" stroke="#b9dbe7" stroke-width="2.2" stroke-linecap="round" stroke-linejoin="round"/>
<path d="M329.4 22.2 L334.3 35.3 L338.7 50.2 L347.0 65.9" fill="none" stroke="#b9dbe7" stroke-width="2.2" stroke-linecap="round" stroke-linejoin="round"/>
<path d="M374.2 31.6 L391.0 30.8 L404.1 37.6 L426.5 36.1" fill="none" stroke="#b9dbe7" stroke-width="2.2" stroke-linecap="round" stroke-linejoin="round"/>
<path d="M228.6 120.5 L240.9 117.5" fill="none" stroke="#b9dbe7" stroke-width="2.2" stroke-linecap="round" stroke-linejoin="round"/>
<path d="M0.0 83.9 L24.9 85.2 L87.1 111.3 L107.0 133.7 L129.4 158.6 L141.9 183.5 L161.8 203.4 L164.3 228.3 L169.2 245.7" fill="none" stroke="#f6b59c" stroke-width="1.3" stroke-linejoin="round" opacity=".9"/>
<path d="M24.9 85.2 L62.2 71.5 L99.6 61.5 L125.7 49.1" fill="none" stroke="#f6b59c" stroke-width="1.3" stroke-linejoin="round" opacity=".9"/>
<path d="M87.1 111.3 L62.2 138.7 L32.4 161.1 L10.0 173.5 L0.0 195.9" fill="none" stroke="#f6b59c" stroke-width="1.3" stroke-linejoin="round" opacity=".9"/>
<path d="M0.0 210.8 L24.9 218.3 L57.2 220.8 L72.2 238.2 L107.0 245.7 L124.4 253.2 L154.3 250.7 L169.2 245.7 L199.1 238.2 L248.9 224.5 L271.3 213.3 L287.5 215.8" fill="none" stroke="#f6b59c" stroke-width="1.3" stroke-linejoin="round" opacity=".9"/>
<path d="M124.4 253.2 L114.5 273.1 L94.6 290.5 L82.1 305.4 L62.2 320.4" fill="none" stroke="#f6b59c" stroke-width="1.3" stroke-linejoin="round" opacity=".9"/>
<path d="M199.1 238.2 L224.0 243.2 L246.4 253.2 L273.8 254.4 L331.0 254.4" fill="none" stroke="#f6b59c" stroke-width="1.3" stroke-linejoin="round" opacity=".9"/>
<path d="M246.4 224.5 L245.1 253.2 L233.9 273.1 L224.0 288.0 L229.0 320.4" fill="none" stroke="#f6b59c" stroke-width="1.3" stroke-linejoin="round" opacity=".9"/>
<path d="M311.1 6.8 L298.7 36.6 L288.7 74.0 L281.2 111.3 L283.7 131.2 L263.8 153.6 L258.8 188.4" fill="none" stroke="#f6b59c" stroke-width="1.3" stroke-linejoin="round" opacity=".9"/>
<path d="M149.3 148.6 L146.8 123.7 L159.3 108.8 L179.2 105.1 L194.1 98.9" fill="none" stroke="#f6b59c" stroke-width="1.3" stroke-linejoin="round" opacity=".9"/>
<path d="M134.4 -0.7 L138.1 24.2 L125.7 49.1" fill="none" stroke="#f6b59c" stroke-width="1.3" stroke-linejoin="round" opacity=".9"/>
<path d="M169.2 -0.7 L171.7 24.2 L189.1 31.7" fill="none" stroke="#f6b59c" stroke-width="1.3" stroke-linejoin="round" opacity=".9"/>
<path d="M216.5 -0.7 L196.6 24.2 L189.1 31.7" fill="none" stroke="#f6b59c" stroke-width="1.3" stroke-linejoin="round" opacity=".9"/>
<path d="M340.0 138.7 L316.1 151.1" fill="none" stroke="#f6b59c" stroke-width="1.3" stroke-linejoin="round" opacity=".9"/>
<path d="M246.4 320.4 L273.8 298.0 L311.1 285.5 L340.0 278.0" fill="none" stroke="#f6b59c" stroke-width="1.3" stroke-linejoin="round" opacity=".9"/>
<path d="M149.3 148.6 L141.9 183.5" fill="none" stroke="#f6b59c" stroke-width="1.3" stroke-linejoin="round" opacity=".9"/>
<path d="M189.1 31.7 L171.7 44.1 L154.3 66.5" fill="none" stroke="#f6b59c" stroke-width="1.3" stroke-linejoin="round" opacity=".9"/>
<path d="M324.0 81.4 L361.3 106.3 L413.6 98.9 L458.4 103.8 L473.3 81.4 L483.3 61.5" fill="none" stroke="#f6b59c" stroke-width="1.3" stroke-linejoin="round" opacity=".9"/>
<path d="M538.0 61.5 L535.5 98.9 L518.1 133.7 L545.5 133.7 L572.9 138.7" fill="none" stroke="#f6b59c" stroke-width="1.3" stroke-linejoin="round" opacity=".9"/>
<path d="M473.3 81.4 L498.2 44.1 L538.0 61.5 L562.9 56.5 L595.3 61.5" fill="none" stroke="#f6b59c" stroke-width="1.3" stroke-linejoin="round" opacity=".9"/>
<path d="M366.3 255.6 L381.2 263.1 L386.2 320.4" fill="none" stroke="#f6b59c" stroke-width="1.3" stroke-linejoin="round" opacity=".9"/>
<path d="M388.7 260.6 L413.6 260.6 L436.0 259.4" fill="none" stroke="#f6b59c" stroke-width="1.3" stroke-linejoin="round" opacity=".9"/>
<path d="M758.5 14.2 L768.4 24.2 L773.4 39.1 L763.5 44.1 L748.5 54.0 L718.7 70.2" fill="none" stroke="#f6b59c" stroke-width="1.3" stroke-linejoin="round" opacity=".9"/>
<path d="M718.7 70.2 L708.7 76.4 L693.8 86.4 L663.9 88.9 L644.0 92.6" fill="none" stroke="#f6b59c" stroke-width="1.3" stroke-linejoin="round" opacity=".9"/>
<path d="M783.4 21.7 L793.3 9.2 L818.2 -0.7 L843.1 1.8" fill="none" stroke="#f6b59c" stroke-width="1.3" stroke-linejoin="round" opacity=".9"/>
<path d="M875.5 1.8 L902.8 6.7 L925.2 1.8" fill="none" stroke="#f6b59c" stroke-width="1.3" stroke-linejoin="round" opacity=".9"/>
<path d="M44.8 -0.7 L74.7 9.3 L99.6 26.7 L112.0 42.9 L125.7 49.1" fill="none" stroke="#e6819f" stroke-width="1.4" stroke-linejoin="round" opacity=".85"/>
<path d="M125.7 49.1 L139.4 55.3 L154.3 66.5 L171.7 64.5 L184.2 76.5 L189.1 93.9 L204.1 106.3" fill="none" stroke="#e6819f" stroke-width="1.4" stroke-linejoin="round" opacity=".85"/>
<path d="M125.7 49.1 L109.5 66.5 L92.1 91.4 L87.1 111.3" fill="none" stroke="#e6819f" stroke-width="1.4" stroke-linejoin="round" opacity=".85"/>
<path d="M189.1 31.7 L196.6 39.1 L214.0 36.6 L238.9 31.7 L268.8 18.0 L311.1 6.8 L340.0 14.2" fill="none" stroke="#e6819f" stroke-width="1.4" stroke-linejoin="round" opacity=".85"/>
<path d="M204.1 106.3 L231.5 146.1 L251.4 178.5 L271.3 205.9 L287.5 215.8 L301.1 232.0 L331.0 254.4 L340.0 253.2" fill="none" stroke="#e6819f" stroke-width="1.4" stroke-linejoin="round" opacity=".85"/>
<path d="M316.1 151.1 L306.1 173.5 L298.7 198.4 L291.2 213.3" fill="none" stroke="#e6819f" stroke-width="1.4" stroke-linejoin="round" opacity=".85"/>
<path d="M196.6 39.1 L199.1 61.5 L201.6 81.4 L194.1 98.9" fill="none" stroke="#e6819f" stroke-width="1.4" stroke-linejoin="round" opacity=".85"/>
<path d="M453.4 103.8 L473.3 81.4 L483.3 66.5 L498.2 61.5 L535.5 57.8 L562.9 49.1 L595.3 61.5" fill="none" stroke="#e6819f" stroke-width="1.4" stroke-linejoin="round" opacity=".85"/>
<path d="M498.2 44.1 L485.8 71.5" fill="none" stroke="#e6819f" stroke-width="1.4" stroke-linejoin="round" opacity=".85"/>
<path d="M438.5 -0.7 L441.0 14.2 L498.2 36.6 L548.0 39.1 L572.9 26.7 L585.3 26.7" fill="none" stroke="#e6819f" stroke-width="1.4" stroke-linejoin="round" opacity=".85"/>
<path d="M585.3 26.7 L595.3 44.1 L607.7 64.0 L622.7 83.9 L637.6 101.3" fill="none" stroke="#e6819f" stroke-width="1.4" stroke-linejoin="round" opacity=".85"/>
<path d="M595.3 61.5 L607.7 64.0 L630.1 49.1 L664.0 29.2" fill="none" stroke="#e6819f" stroke-width="1.4" stroke-linejoin="round" opacity=".85"/>
<path d="M572.9 -0.7 L585.3 26.7" fill="none" stroke="#e6819f" stroke-width="1.4" stroke-linejoin="round" opacity=".85"/>
<path d="M607.7 64.0 L597.8 81.4 L612.7 88.9 L637.6 101.3" fill="none" stroke="#e6819f" stroke-width="1.4" stroke-linejoin="round" opacity=".85"/>
<path d="M622.7 -0.7 L607.7 24.2 L607.7 64.0" fill="none" stroke="#e6819f" stroke-width="1.4" stroke-linejoin="round" opacity=".85"/>
<path d="M562.9 -0.7 L548.0 29.2 L543.0 59.0" fill="none" stroke="#e6819f" stroke-width="1.4" stroke-linejoin="round" opacity=".85"/>
<path d="M644.0 26.7 L676.4 26.7 L706.2 11.7 L728.6 -0.7" fill="none" stroke="#e6819f" stroke-width="1.4" stroke-linejoin="round" opacity=".85"/>
<path d="M676.4 26.7 L693.8 44.1 L706.2 59.0 L718.7 70.2" fill="none" stroke="#e6819f" stroke-width="1.4" stroke-linejoin="round" opacity=".85"/>
<path d="M644.0 39.1 L658.9 36.6 L676.4 26.7" fill="none" stroke="#e6819f" stroke-width="1.4" stroke-linejoin="round" opacity=".85"/>
<path d="M902.8 6.7 L907.8 -0.7 L920.3 -0.7" fill="none" stroke="#e6819f" stroke-width="1.4" stroke-linejoin="round" opacity=".85"/>
<path d="M597.8 56.5 L610.2 49.1 L630.1 46.6 L637.6 56.5 L630.1 69.0 L612.7 74.0 L600.3 69.0Z" fill="#e6b9c6" opacity=".35"/>
<path d="M610.2 57.8 L626.4 49.1 L628.9 52.8 L613.9 62.8Z" fill="#c98aa0" opacity=".0"/>
<path d="M228.6 1.7 L245.4 3.6 L260.3 -0.2 L290.2 1.7 L312.6 7.3" fill="none" stroke="#bdaecb" stroke-width="1.3" stroke-linejoin="round" opacity=".9"/>
<path d="M312.6 7.3 L331.3 20.4 L338.7 54.0 L342.5 91.3 L361.1 117.5 L374.2 139.9 L368.6 173.5 L435.8 175.3 L439.6 199.6 L465.7 218.3 L469.4 233.2 L484.4 233.2" fill="none" stroke="#bdaecb" stroke-width="1.3" stroke-linejoin="round" opacity=".9"/>
<path d="M241.7 311.6 L267.8 307.9 L305.1 310.1 L357.4 315.4 L406.0 307.9 L430.2 306.4 L494.1 315.4" fill="none" stroke="#bdaecb" stroke-width="1.3" stroke-linejoin="round" opacity=".9"/>
<path d="M783.4 -0.7 L773.4 9.2 L772.2 26.7 L768.4 31.6 L778.4 40.3" fill="none" stroke="#bdaecb" stroke-width="1.3" stroke-linejoin="round" opacity=".9"/>
<path d="M975.0 32.9 L920.3 36.6 L843.1 49.1 L805.8 76.4 L746.0 121.2 L701.2 137.4 L658.9 158.6" fill="none" stroke="#a99bbd" stroke-width="1.5" stroke-linejoin="round"/>
<path d="M664.0 156.1 L612.7 174.8 L498.2 255.6 L468.4 320.4" fill="none" stroke="#a99bbd" stroke-width="1.5" stroke-linejoin="round"/>
<path d="M475.8 235.7 L498.2 255.6" fill="none" stroke="#a99bbd" stroke-width="0.8" stroke-linejoin="round"/>
<path d="M431.0 307.9 L459.6 320.4" fill="none" stroke="#a99bbd" stroke-width="0.8" stroke-linejoin="round"/>
<path d="M778.4 40.3 L805.8 76.4" fill="none" stroke="#a99bbd" stroke-width="0.8" stroke-linejoin="round"/>
<text x="125.9" y="65.4" text-anchor="middle" style="font-size:13px;" fill="#3a3a3a" stroke="#fff" stroke-width="2.2" stroke-opacity=".75" paint-order="stroke" stroke-linejoin="round">Maringá</text>
<text x="197.2" y="53.8" text-anchor="middle" style="font-size:13px;" fill="#3a3a3a" stroke="#fff" stroke-width="2.2" stroke-opacity=".75" paint-order="stroke" stroke-linejoin="round">Londrina</text>
<text x="86.3" y="124.5" text-anchor="middle" style="font-size:11px;" fill="#3a3a3a" stroke="#fff" stroke-width="2.2" stroke-opacity=".75" paint-order="stroke" stroke-linejoin="round">Campo</text>
<text x="86.3" y="136.4" text-anchor="middle" style="font-size:11px;" fill="#3a3a3a" stroke="#fff" stroke-width="2.2" stroke-opacity=".75" paint-order="stroke" stroke-linejoin="round">Mourão</text>
<text x="137.5" y="175.7" text-anchor="middle" style="font-size:11.5px;font-style:italic;" fill="#8d6e9a" stroke="#fff" stroke-width="2.2" stroke-opacity=".75" paint-order="stroke" stroke-linejoin="round">Paraná</text>
<text x="288.3" y="201.0" text-anchor="middle" style="font-size:11px;" fill="#3a3a3a" stroke="#fff" stroke-width="2.2" stroke-opacity=".75" paint-order="stroke" stroke-linejoin="round">Ponta</text>
<text x="288.3" y="212.9" text-anchor="middle" style="font-size:11px;" fill="#3a3a3a" stroke="#fff" stroke-width="2.2" stroke-opacity=".75" paint-order="stroke" stroke-linejoin="round">Grossa</text>
<text x="169.6" y="243.9" text-anchor="middle" style="font-size:11px;" fill="#3a3a3a" stroke="#fff" stroke-width="2.2" stroke-opacity=".75" paint-order="stroke" stroke-linejoin="round">Guarapuava</text>
<text x="372.0" y="233.3" text-anchor="middle" style="font-size:11px;" fill="#3a3a3a" stroke="#fff" stroke-width="2.2" stroke-opacity=".75" paint-order="stroke" stroke-linejoin="round">Colombo</text>
<text x="368.6" y="265.2" text-anchor="middle" style="font-size:13px;" fill="#3a3a3a" stroke="#fff" stroke-width="2.2" stroke-opacity=".75" paint-order="stroke" stroke-linejoin="round">Curitiba</text>
<text x="437.0" y="256.3" text-anchor="middle" style="font-size:11px;" fill="#3a3a3a" stroke="#fff" stroke-width="2.2" stroke-opacity=".75" paint-order="stroke" stroke-linejoin="round">Paranaguá</text>
<text x="0.5" y="80.8" text-anchor="middle" style="font-size:11px;" fill="#3a3a3a" stroke="#fff" stroke-width="2.2" stroke-opacity=".75" paint-order="stroke" stroke-linejoin="round">Umuarama</text>
<text x="-12.0" y="199.9" text-anchor="middle" style="font-size:11px;" fill="#3a3a3a" stroke="#fff" stroke-width="2.2" stroke-opacity=".75" paint-order="stroke" stroke-linejoin="round">Cascavel</text>
<text x="314.5" y="1.8" text-anchor="middle" style="font-size:11px;" fill="#3a3a3a" stroke="#fff" stroke-width="2.2" stroke-opacity=".75" paint-order="stroke" stroke-linejoin="round">Ourinhos</text>
<text x="482.5" y="46.8" text-anchor="middle" style="font-size:11px;" fill="#3a3a3a" stroke="#fff" stroke-width="2.2" stroke-opacity=".75" paint-order="stroke" stroke-linejoin="round">Tatuí</text>
<text x="477.0" y="79.3" text-anchor="middle" style="font-size:11px;" fill="#3a3a3a" stroke="#fff" stroke-width="2.2" stroke-opacity=".75" paint-order="stroke" stroke-linejoin="round">Itapetininga</text>
<text x="525.9" y="21.4" text-anchor="middle" style="font-size:11px;" fill="#3a3a3a" stroke="#fff" stroke-width="2.2" stroke-opacity=".75" paint-order="stroke" stroke-linejoin="round">Indaiatuba</text>
<text x="586.0" y="22.1" text-anchor="middle" style="font-size:13px;" fill="#3a3a3a" stroke="#fff" stroke-width="2.2" stroke-opacity=".75" paint-order="stroke" stroke-linejoin="round">Jundiaí</text>
<text x="640.0" y="2.8" text-anchor="middle" style="font-size:11px;" fill="#3a3a3a" stroke="#fff" stroke-width="2.2" stroke-opacity=".75" paint-order="stroke" stroke-linejoin="round">Bragança</text>
<text x="640.0" y="13.8" text-anchor="middle" style="font-size:11px;" fill="#3a3a3a" stroke="#fff" stroke-width="2.2" stroke-opacity=".75" paint-order="stroke" stroke-linejoin="round">Paulista</text>
<text x="533.5" y="53.7" text-anchor="middle" style="font-size:13px;" fill="#3a3a3a" stroke="#fff" stroke-width="2.2" stroke-opacity=".75" paint-order="stroke" stroke-linejoin="round">Sorocaba</text>
<text x="608.9" y="77.3" text-anchor="middle" style="font-size:13px;" fill="#3a3a3a" stroke="#fff" stroke-width="2.2" stroke-opacity=".75" paint-order="stroke" stroke-linejoin="round">São Paulo</text>
<text x="677.0" y="43.8" text-anchor="middle" style="font-size:13px;" fill="#3a3a3a" stroke="#fff" stroke-width="2.2" stroke-opacity=".75" paint-order="stroke" stroke-linejoin="round">São José dos</text>
<text x="677.0" y="59.0" text-anchor="middle" style="font-size:13px;" fill="#3a3a3a" stroke="#fff" stroke-width="2.2" stroke-opacity=".75" paint-order="stroke" stroke-linejoin="round">Campos</text>
<text x="706.7" y="23.3" text-anchor="middle" style="font-size:11px;" fill="#3a3a3a" stroke="#fff" stroke-width="2.2" stroke-opacity=".75" paint-order="stroke" stroke-linejoin="round">Taubaté</text>
<text x="637.0" y="96.7" text-anchor="middle" style="font-size:13px;" fill="#3a3a3a" stroke="#fff" stroke-width="2.2" stroke-opacity=".75" paint-order="stroke" stroke-linejoin="round">Santos</text>
<text x="594.8" y="122.3" text-anchor="middle" style="font-size:11px;" fill="#3a3a3a" stroke="#fff" stroke-width="2.2" stroke-opacity=".75" paint-order="stroke" stroke-linejoin="round">Itanhaém</text>
<text x="720.0" y="82.3" text-anchor="middle" style="font-size:11px;" fill="#3a3a3a" stroke="#fff" stroke-width="2.2" stroke-opacity=".75" paint-order="stroke" stroke-linejoin="round">Caraguatatuba</text>
<text x="819.8" y="21.3" text-anchor="middle" style="font-size:11px;" fill="#3a3a3a" stroke="#fff" stroke-width="2.2" stroke-opacity=".75" paint-order="stroke" stroke-linejoin="round">Angra</text>
<text x="819.8" y="32.8" text-anchor="middle" style="font-size:11px;" fill="#3a3a3a" stroke="#fff" stroke-width="2.2" stroke-opacity=".75" paint-order="stroke" stroke-linejoin="round">dos Reis</text>
<text x="988.0" y="13.0" text-anchor="middle" style="font-size:11px;" fill="#3a3a3a" stroke="#fff" stroke-width="2.2" stroke-opacity=".75" paint-order="stroke" stroke-linejoin="round">Saquarema</text>
<circle cx="125.9" cy="49.5" r="2" fill="#fff" stroke="#555" stroke-width=".8"/>
<circle cx="196.8" cy="39.0" r="2" fill="#fff" stroke="#555" stroke-width=".8"/>
<circle cx="85.9" cy="111.9" r="2" fill="#fff" stroke="#555" stroke-width=".8"/>
<circle cx="287.6" cy="215.7" r="2" fill="#fff" stroke="#555" stroke-width=".8"/>
<circle cx="169.6" cy="246.7" r="2" fill="#fff" stroke="#555" stroke-width=".8"/>
<circle cx="436.9" cy="258.6" r="2" fill="#fff" stroke="#555" stroke-width=".8"/>
<circle cx="314.5" cy="6.2" r="2" fill="#fff" stroke="#555" stroke-width=".8"/>
<circle cx="586.0" cy="26.9" r="2" fill="#fff" stroke="#555" stroke-width=".8"/>
<circle cx="533.5" cy="58.1" r="2" fill="#fff" stroke="#555" stroke-width=".8"/>
<circle cx="636.3" cy="101.1" r="2" fill="#fff" stroke="#555" stroke-width=".8"/>
<circle cx="594.8" cy="125.9" r="2" fill="#fff" stroke="#555" stroke-width=".8"/>
<circle cx="720.0" cy="69.9" r="2" fill="#fff" stroke="#555" stroke-width=".8"/>
<circle cx="677.0" cy="26.9" r="2" fill="#fff" stroke="#555" stroke-width=".8"/>
<circle cx="706.7" cy="10.9" r="2" fill="#fff" stroke="#555" stroke-width=".8"/>
<circle cx="820.1" cy="8.2" r="2" fill="#fff" stroke="#555" stroke-width=".8"/>
<circle cx="555.2" cy="17.4" r="2" fill="#fff" stroke="#555" stroke-width=".8"/>
<path d="M368.3 254.4 L391.2 239.5 L398.7 238.2 L409.9 218.3 L433.5 213.8 L439.7 204.6 L450.9 204.6 L464.6 193.4 L466.4 184.7 L474.6 179.7 L483.3 177.3 L495.7 168.5 L495.7 163.6 L504.4 149.9 L519.4 139.9 L526.8 139.9 L542.5 133.7 L542.5 128.7 L550.5 118.8 L553.0 115.0 L566.7 101.3 L574.1 100.8 L580.4 92.6 L587.8 74.0 L594.0 66.0 L607.7 64.5" fill="none" stroke="#1f7a54" stroke-width="5" stroke-linejoin="round" stroke-linecap="round"/>
<g transform="translate(368.3 254.6)"><path d="M2 -2 L22 -16 L26 -12 L8 0Z" fill="#000" opacity=".22"/><path d="M0 0 C-1.5 -6 -12.2 -17 -12.2 -28.5 A12.2 12.2 0 0 1 12.2 -28.5 C12.2 -17 1.5 -6 0 0Z" fill="#2e87cc" stroke="#2272b0" stroke-width="1"/><path d="M0 -40 A11.5 11.5 0 0 1 11.5 -28.5 C11.5 -22 8 -16 4 -9 C7 -17 9 -22 9 -28 A9.5 9.5 0 0 0 0 -38.5Z" fill="#256fae" opacity=".5"/><circle cx="0" cy="-28.3" r="4.3" fill="#fff"/></g>
<g transform="translate(607.7 64.9)"><path d="M2 -2 L22 -16 L26 -12 L8 0Z" fill="#000" opacity=".22"/><path d="M0 0 C-1.5 -6 -12.2 -17 -12.2 -28.5 A12.2 12.2 0 0 1 12.2 -28.5 C12.2 -17 1.5 -6 0 0Z" fill="#2e87cc" stroke="#2272b0" stroke-width="1"/><path d="M0 -40 A11.5 11.5 0 0 1 11.5 -28.5 C11.5 -22 8 -16 4 -9 C7 -17 9 -22 9 -28 A9.5 9.5 0 0 0 0 -38.5Z" fill="#256fae" opacity=".5"/><circle cx="0" cy="-28.3" r="4.3" fill="#fff"/></g>
</svg><div class="b" style="left:0;top:0;width:975px;height:318px;border:1px solid #bfc6c3;border-radius:19px"></div><div class="b" style="left:10.3px;top:10.5px;width:34.2px;height:63.2px;background:#fff;border:2px solid rgba(0,0,0,.2);border-radius:5px;background-clip:padding-box"></div><div class="b" style="left:12.5px;top:42px;width:28.5px;height:1px;background:#ccc"></div><div class="t" style="top:15.78px;font-size:24.00px;line-height:26.81px;color:#111;left:19.30px;-webkit-text-stroke:.5px #111;">+</div><div class="t" style="top:44.28px;font-size:24.00px;line-height:26.81px;color:#111;left:19.30px;-webkit-text-stroke:.5px #111;">−</div><div class="b" style="left:806px;top:301px;width:169px;height:17px;background:rgba(255,255,255,.8)"></div><svg class="b" style="left:811px;top:305.5px" width="12" height="8" viewBox="0 0 12 8"><rect width="12" height="4" fill="#4c7be1"/><rect y="4" width="12" height="4" fill="#ffd500"/></svg><div class="t" style="top:303.14px;font-size:12.00px;line-height:13.40px;color:#0078a8;left:826.00px;letter-spacing:0.079px;">Leaflet</div><div class="t" style="top:303.14px;font-size:12.00px;line-height:13.40px;color:#333;left:867.00px;">|</div><div class="t" style="top:303.14px;font-size:12.00px;line-height:13.40px;color:#333;left:871.80px;letter-spacing:0.008px;">© OpenStreetMap</div></div>
<div class="b " style="left:336.00px;top:1896.30px;width:973.70px;height:409.50px;background:linear-gradient(180deg,#fbfaf8 0,#fefefc 26px);border-radius:22px;box-shadow:0 12px 26px rgba(60,50,30,.10);"></div>
<div class="t" style="top:1915.02px;font-size:16.00px;line-height:17.87px;color:#14211e;left:352.40px;font-weight:700;letter-spacing:0.078px;">Simulacao de frete</div>
<div class="t" style="top:1937.62px;font-size:16.00px;line-height:17.87px;color:#55635e;left:352.40px;">Distancia considerada: 403,1 km</div>
<div class="t" style="top:1962.92px;font-size:16.00px;line-height:17.87px;color:#55635e;left:352.40px;letter-spacing:-0.026px;">Consumo usado: 10 km/l (Fiat Ducato ·</div>
<div class="t" style="top:1988.52px;font-size:16.00px;line-height:17.87px;color:#55635e;left:352.40px;letter-spacing:-0.167px;">Pedagio da rota: R$ 25,80</div>
<div class="t" style="top:2014.92px;font-size:16.00px;line-height:17.87px;color:#55635e;left:352.40px;letter-spacing:-0.114px;">Combustivel estimado: R$ 277,74</div>
<div class="t" style="top:2040.12px;font-size:16.00px;line-height:17.87px;color:#55635e;left:352.40px;letter-spacing:-0.055px;">Base combustivel + pedagio: R$ 303,54</div>
<div class="t" style="top:2065.22px;font-size:16.00px;line-height:17.87px;color:#55635e;left:352.40px;letter-spacing:-0.008px;">Extra operacional (20%): R$ 60,71</div>
<div class="t" style="top:2090.52px;font-size:16.00px;line-height:17.87px;color:#55635e;left:352.40px;letter-spacing:0.076px;">Base operacional (antes da descarga): R$ 364,24</div>
<div class="t" style="top:2116.72px;font-size:16.00px;line-height:17.87px;color:#55635e;left:352.40px;letter-spacing:-0.010px;">Base total com descarga: R$ 364,24</div>
<div class="t" style="top:2142.72px;font-size:16.00px;line-height:17.87px;color:#55635e;left:352.40px;letter-spacing:0.134px;">Distancia, tempo e pedagios calculados automaticamente pela rota 1.</div>
<div class="t" style="top:1962.92px;font-size:16.00px;line-height:17.87px;color:#55635e;left:699.50px;">)</div>
<div class="t" style="top:2167.72px;font-size:16.00px;line-height:17.87px;color:#55635e;left:352.40px;letter-spacing:0.100px;">Quando estiver certo do preco, clique em</div>
<div class="t" style="top:2167.72px;font-size:16.00px;line-height:17.87px;color:#3f4d48;left:653.50px;letter-spacing:0.567px;-webkit-text-stroke:0.50px #3f4d48;">Fechar frete</div>
<div class="t" style="top:2167.72px;font-size:16.00px;line-height:17.87px;color:#55635e;left:751.00px;letter-spacing:-0.119px;">para levar tudo para a aba Fretes.</div>
<div class="b " style="left:352.50px;top:2206.00px;width:463.00px;height:83.50px;background:linear-gradient(180deg,#fdf6e6,#fbf0d9);border:1px solid #f0d9b2;border-radius:19px;"></div>
<div class="b " style="left:830.00px;top:2206.00px;width:463.50px;height:83.50px;background:linear-gradient(180deg,#e8f6f0,#ddf1e8);border:1px solid #b3dccb;border-radius:19px;"></div>
<div class="t" style="top:2225.79px;font-size:11.50px;line-height:12.85px;color:#5f6e68;left:370.00px;letter-spacing:0.664px;">FRETE MINIMO</div>
<div class="t" style="top:2225.79px;font-size:11.50px;line-height:12.85px;color:#5f6e68;left:849.00px;letter-spacing:0.437px;">FRETE IDEAL</div>
<div class="t" style="top:2245.13px;font-size:24.50px;line-height:27.37px;color:#14211e;left:370.00px;font-weight:700;transform:scaleX(1.0188);transform-origin:0 0;">R$ 1.092,73</div>
<div class="t" style="top:2245.13px;font-size:24.50px;line-height:27.37px;color:#14211e;left:849.00px;font-weight:700;transform:scaleX(1.0076);transform-origin:0 0;">R$ 1.456,97</div>
</div></div>
</body></html>
